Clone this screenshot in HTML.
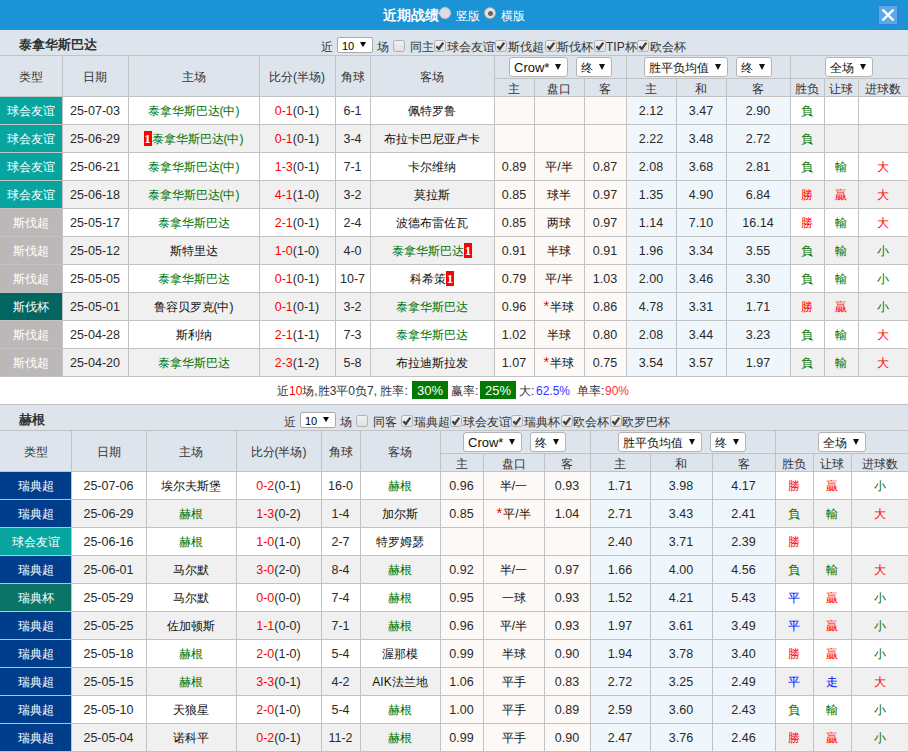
<!DOCTYPE html><html><head><meta charset="utf-8"><style>
*{margin:0;padding:0;box-sizing:border-box}
html,body{width:908px;height:752px;overflow:hidden;background:#fff;font-family:"Liberation Sans",sans-serif;font-size:12px;color:#333}
div{position:absolute}
.c{text-align:center;white-space:nowrap;overflow:hidden}
.n{font-size:12.5px}
.ttl{font-weight:bold;font-size:13px;color:#333;white-space:nowrap}
.flt{white-space:nowrap;font-size:12px;color:#333}
.flt span{position:relative}
.sel{background:#fff;border:1px solid #b4b4b4;border-radius:3px;white-space:nowrap;font-size:12px;color:#111}
.st{left:4px;top:3px;height:14px;line-height:14px}
.tri{top:6px;width:0;height:0;border-left:3px solid transparent;border-right:3px solid transparent;border-top:6px solid #111}
.arr{font-size:9px}
.nsel{background:#fff;border:1px solid #aaa;border-radius:2px;width:36px;height:16px}
.ns10{left:4px;top:2px;font-size:11px;line-height:12px;color:#000}
.tri2{left:22px;top:4px;width:0;height:0;border-left:3px solid transparent;border-right:3px solid transparent;border-top:5px solid #000}
.arr2{position:absolute;left:22px;top:1px;font-size:8px;line-height:12px}
.cb{width:12px;height:12px;border:1px solid #b0b0b0;border-radius:2.5px;background:linear-gradient(#f2f2f2,#e0e0e0)}
.cb svg{left:-1px;top:-1px}
.gb{background:#007a00;color:#fff;width:36px;height:18px;text-align:center;line-height:19px;font-size:13px}
.rc{display:inline-block;background:#f00;color:#fff;width:8px;text-align:center;line-height:15px;font-family:"Liberation Serif",serif;font-size:13px;font-weight:bold}

</style></head><body>
<div style="position:absolute;left:0px;top:0px;width:908px;height:30px;background:#1b93d5"></div>
<div style="left:383px;top:0;height:30px;line-height:30px;color:#fff;font-weight:bold;font-size:14px;white-space:nowrap">近期战绩</div>
<div style="left:439px;top:7px;width:12px;height:12px;border-radius:50%;background:#dedede;border:1px solid #c4c4c4"></div>
<div style="left:456px;top:1px;height:30px;line-height:30px;color:#fff;font-size:12px;white-space:nowrap">竖版</div>
<div style="left:484px;top:7px;width:12px;height:12px;border-radius:50%;background:#e4e4e4;border:1px solid #aaa"><div style="left:2.5px;top:2.5px;width:5px;height:5px;border-radius:50%;background:#666"></div></div>
<div style="left:501px;top:1px;height:30px;line-height:30px;color:#fff;font-size:12px;white-space:nowrap">横版</div>
<div style="left:877px;top:4px;width:22px;height:22px;background:#5aa8e6;border:2px solid #2a88dc"><svg width="18" height="18" style="position:absolute;left:0;top:0"><path d="M3.5 3.5L14.5 14.5M14.5 3.5L3.5 14.5" stroke="#fff" stroke-width="2.4"/></svg></div>
<div style="position:absolute;left:0px;top:30px;width:908px;height:25px;background:#dde4ec"></div>
<div class="ttl" style="left:19px;top:32px;height:25px;line-height:25px">泰拿华斯巴达</div>
<div class="flt" style="left:321px;top:40px;height:14px;line-height:14px">近</div>
<div class="nsel" style="left:337px;top:37px"><div class="ns10">10</div><div class="tri2"></div></div>
<div class="flt" style="left:377px;top:40px;height:14px;line-height:14px">场</div>
<div class="cb" style="left:393px;top:40px"></div>
<div class="flt" style="left:410px;top:40px;height:14px;line-height:14px">同主</div>
<div class="cb" style="left:434px;top:40px"><svg width="12" height="12" style="position:absolute;left:-1px;top:-1px"><path d="M2.4 6.2L4.8 8.9L9.3 2.6" stroke="#404040" stroke-width="2.3" fill="none"/></svg></div>
<div class="flt" style="left:447px;top:40px;height:14px;line-height:14px">球会友谊</div>
<div class="cb" style="left:495px;top:40px"><svg width="12" height="12" style="position:absolute;left:-1px;top:-1px"><path d="M2.4 6.2L4.8 8.9L9.3 2.6" stroke="#404040" stroke-width="2.3" fill="none"/></svg></div>
<div class="flt" style="left:508px;top:40px;height:14px;line-height:14px">斯伐超</div>
<div class="cb" style="left:545px;top:40px"><svg width="12" height="12" style="position:absolute;left:-1px;top:-1px"><path d="M2.4 6.2L4.8 8.9L9.3 2.6" stroke="#404040" stroke-width="2.3" fill="none"/></svg></div>
<div class="flt" style="left:557px;top:40px;height:14px;line-height:14px">斯伐杯</div>
<div class="cb" style="left:594px;top:40px"><svg width="12" height="12" style="position:absolute;left:-1px;top:-1px"><path d="M2.4 6.2L4.8 8.9L9.3 2.6" stroke="#404040" stroke-width="2.3" fill="none"/></svg></div>
<div class="flt" style="left:606px;top:40px;height:14px;line-height:14px">TIP杯</div>
<div class="cb" style="left:637px;top:40px"><svg width="12" height="12" style="position:absolute;left:-1px;top:-1px"><path d="M2.4 6.2L4.8 8.9L9.3 2.6" stroke="#404040" stroke-width="2.3" fill="none"/></svg></div>
<div class="flt" style="left:650px;top:40px;height:14px;line-height:14px">欧会杯</div>
<div style="position:absolute;left:0px;top:55px;width:908px;height:41px;background:#dde4ec"></div>
<div style="position:absolute;left:0px;top:55px;width:908px;height:1px;background:#c2c2c2"></div>
<div class="c" style="left:0px;top:56px;width:62px;height:40px;line-height:42px;">类型</div>
<div class="c" style="left:62px;top:56px;width:66px;height:40px;line-height:42px;">日期</div>
<div class="c" style="left:128px;top:56px;width:131px;height:40px;line-height:42px;">主场</div>
<div class="c" style="left:259px;top:56px;width:76px;height:40px;line-height:42px;">比分(半场)</div>
<div class="c" style="left:335px;top:56px;width:35px;height:40px;line-height:42px;">角球</div>
<div class="c" style="left:370px;top:56px;width:124px;height:40px;line-height:42px;">客场</div>
<div style="position:absolute;left:62px;top:55px;width:1px;height:41px;background:#c2c2c2"></div>
<div style="position:absolute;left:128px;top:55px;width:1px;height:41px;background:#c2c2c2"></div>
<div style="position:absolute;left:259px;top:55px;width:1px;height:41px;background:#c2c2c2"></div>
<div style="position:absolute;left:335px;top:55px;width:1px;height:41px;background:#c2c2c2"></div>
<div style="position:absolute;left:370px;top:55px;width:1px;height:41px;background:#c2c2c2"></div>
<div style="position:absolute;left:494px;top:55px;width:1px;height:41px;background:#c2c2c2"></div>
<div style="position:absolute;left:626px;top:55px;width:1px;height:41px;background:#c2c2c2"></div>
<div style="position:absolute;left:790px;top:55px;width:1px;height:41px;background:#c2c2c2"></div>
<div style="position:absolute;left:494px;top:78px;width:414px;height:1px;background:#c2c2c2"></div>
<div style="position:absolute;left:534px;top:78px;width:1px;height:18px;background:#c2c2c2"></div>
<div style="position:absolute;left:584px;top:78px;width:1px;height:18px;background:#c2c2c2"></div>
<div style="position:absolute;left:676px;top:78px;width:1px;height:18px;background:#c2c2c2"></div>
<div style="position:absolute;left:726px;top:78px;width:1px;height:18px;background:#c2c2c2"></div>
<div style="position:absolute;left:824px;top:78px;width:1px;height:18px;background:#c2c2c2"></div>
<div style="position:absolute;left:858px;top:78px;width:1px;height:18px;background:#c2c2c2"></div>
<div class="c" style="left:494px;top:79px;width:40px;height:17px;line-height:21px;">主</div>
<div class="c" style="left:534px;top:79px;width:50px;height:17px;line-height:21px;">盘口</div>
<div class="c" style="left:584px;top:79px;width:42px;height:17px;line-height:21px;">客</div>
<div class="c" style="left:626px;top:79px;width:50px;height:17px;line-height:21px;">主</div>
<div class="c" style="left:676px;top:79px;width:50px;height:17px;line-height:21px;">和</div>
<div class="c" style="left:726px;top:79px;width:64px;height:17px;line-height:21px;">客</div>
<div class="c" style="left:790px;top:79px;width:34px;height:17px;line-height:21px;">胜负</div>
<div class="c" style="left:824px;top:79px;width:34px;height:17px;line-height:21px;">让球</div>
<div class="c" style="left:858px;top:79px;width:50px;height:17px;line-height:21px;">进球数</div>
<div class="sel" style="left:509px;top:57px;width:59px;height:20px"><div class="st" style="font-size:13px;">Crow*</div><div class="tri" style="left:45px"></div></div>
<div class="sel" style="left:576px;top:57px;width:36px;height:20px"><div class="st" style="">终</div><div class="tri" style="left:22px"></div></div>
<div class="sel" style="left:644px;top:57px;width:84px;height:20px"><div class="st" style="">胜平负均值</div><div class="tri" style="left:70px"></div></div>
<div class="sel" style="left:736px;top:57px;width:36px;height:20px"><div class="st" style="">终</div><div class="tri" style="left:22px"></div></div>
<div class="sel" style="left:825px;top:57px;width:48px;height:20px"><div class="st" style="">全场</div><div class="tri" style="left:34px"></div></div>
<div style="position:absolute;left:0px;top:96px;width:908px;height:1px;background:#c2c2c2"></div>
<div style="position:absolute;left:0px;top:97px;width:908px;height:27px;background:#fff"></div>
<div style="position:absolute;left:495px;top:97px;width:131px;height:27px;background:#fdf9f6"></div>
<div style="position:absolute;left:627px;top:97px;width:163px;height:27px;background:#f0f7fc"></div>
<div style="position:absolute;left:0px;top:97px;width:62px;height:27px;background:#08a5a0"></div>
<div class="c" style="left:0px;top:97px;width:62px;height:27px;line-height:29px;color:#fff">球会友谊</div>
<div class="c" style="left:62px;top:97px;width:66px;height:27px;line-height:29px;color:#2a2a2a;font-size:12.5px">25-07-03</div>
<div class="c" style="left:128px;top:97px;width:131px;height:27px;line-height:29px;color:#111"><span style="color:#007400">泰拿华斯巴达(中)</span></div>
<div class="c" style="left:259px;top:97px;width:76px;height:27px;line-height:29px;color:#2a2a2a;font-size:12.5px"><span style="color:#f00">0-1</span>(0-1)</div>
<div class="c" style="left:335px;top:97px;width:35px;height:27px;line-height:29px;color:#2a2a2a;font-size:12.5px">6-1</div>
<div class="c" style="left:370px;top:97px;width:124px;height:27px;line-height:29px;color:#111">佩特罗鲁</div>
<div class="c" style="left:494px;top:97px;width:40px;height:27px;line-height:29px;color:#111"></div>
<div class="c" style="left:534px;top:97px;width:50px;height:27px;line-height:29px;color:#111"></div>
<div class="c" style="left:584px;top:97px;width:42px;height:27px;line-height:29px;color:#111"></div>
<div class="c" style="left:626px;top:97px;width:50px;height:27px;line-height:29px;color:#2a2a2a;font-size:12.5px">2.12</div>
<div class="c" style="left:676px;top:97px;width:50px;height:27px;line-height:29px;color:#2a2a2a;font-size:12.5px">3.47</div>
<div class="c" style="left:726px;top:97px;width:64px;height:27px;line-height:29px;color:#2a2a2a;font-size:12.5px">2.90</div>
<div class="c" style="left:790px;top:97px;width:34px;height:27px;line-height:29px;color:#111"><span style="color:#007400">負</span></div>
<div class="c" style="left:824px;top:97px;width:34px;height:27px;line-height:29px;color:#111"></div>
<div class="c" style="left:858px;top:97px;width:50px;height:27px;line-height:29px;color:#111"></div>
<div style="position:absolute;left:0px;top:124px;width:908px;height:1px;background:#c2c2c2"></div>
<div style="position:absolute;left:62px;top:96px;width:1px;height:28px;background:#c2c2c2"></div>
<div style="position:absolute;left:128px;top:96px;width:1px;height:28px;background:#c2c2c2"></div>
<div style="position:absolute;left:259px;top:96px;width:1px;height:28px;background:#c2c2c2"></div>
<div style="position:absolute;left:335px;top:96px;width:1px;height:28px;background:#c2c2c2"></div>
<div style="position:absolute;left:370px;top:96px;width:1px;height:28px;background:#c2c2c2"></div>
<div style="position:absolute;left:494px;top:96px;width:1px;height:28px;background:#c2c2c2"></div>
<div style="position:absolute;left:534px;top:96px;width:1px;height:28px;background:#c2c2c2"></div>
<div style="position:absolute;left:584px;top:96px;width:1px;height:28px;background:#c2c2c2"></div>
<div style="position:absolute;left:626px;top:96px;width:1px;height:28px;background:#c2c2c2"></div>
<div style="position:absolute;left:676px;top:96px;width:1px;height:28px;background:#c2c2c2"></div>
<div style="position:absolute;left:726px;top:96px;width:1px;height:28px;background:#c2c2c2"></div>
<div style="position:absolute;left:790px;top:96px;width:1px;height:28px;background:#c2c2c2"></div>
<div style="position:absolute;left:824px;top:96px;width:1px;height:28px;background:#c2c2c2"></div>
<div style="position:absolute;left:858px;top:96px;width:1px;height:28px;background:#c2c2c2"></div>
<div style="position:absolute;left:0px;top:125px;width:908px;height:27px;background:#f0f0f0"></div>
<div style="position:absolute;left:495px;top:125px;width:131px;height:27px;background:#fdf9f6"></div>
<div style="position:absolute;left:627px;top:125px;width:163px;height:27px;background:#f0f7fc"></div>
<div style="position:absolute;left:0px;top:125px;width:62px;height:27px;background:#08a5a0"></div>
<div class="c" style="left:0px;top:125px;width:62px;height:27px;line-height:29px;color:#fff">球会友谊</div>
<div class="c" style="left:62px;top:125px;width:66px;height:27px;line-height:29px;color:#2a2a2a;font-size:12.5px">25-06-29</div>
<div class="c" style="left:128px;top:125px;width:131px;height:27px;line-height:29px;color:#111"><span class="rc">1</span><span style="color:#007400">泰拿华斯巴达(中)</span></div>
<div class="c" style="left:259px;top:125px;width:76px;height:27px;line-height:29px;color:#2a2a2a;font-size:12.5px"><span style="color:#f00">0-1</span>(0-1)</div>
<div class="c" style="left:335px;top:125px;width:35px;height:27px;line-height:29px;color:#2a2a2a;font-size:12.5px">3-4</div>
<div class="c" style="left:370px;top:125px;width:124px;height:27px;line-height:29px;color:#111">布拉卡巴尼亚卢卡</div>
<div class="c" style="left:494px;top:125px;width:40px;height:27px;line-height:29px;color:#111"></div>
<div class="c" style="left:534px;top:125px;width:50px;height:27px;line-height:29px;color:#111"></div>
<div class="c" style="left:584px;top:125px;width:42px;height:27px;line-height:29px;color:#111"></div>
<div class="c" style="left:626px;top:125px;width:50px;height:27px;line-height:29px;color:#2a2a2a;font-size:12.5px">2.22</div>
<div class="c" style="left:676px;top:125px;width:50px;height:27px;line-height:29px;color:#2a2a2a;font-size:12.5px">3.48</div>
<div class="c" style="left:726px;top:125px;width:64px;height:27px;line-height:29px;color:#2a2a2a;font-size:12.5px">2.72</div>
<div class="c" style="left:790px;top:125px;width:34px;height:27px;line-height:29px;color:#111"><span style="color:#007400">負</span></div>
<div class="c" style="left:824px;top:125px;width:34px;height:27px;line-height:29px;color:#111"></div>
<div class="c" style="left:858px;top:125px;width:50px;height:27px;line-height:29px;color:#111"></div>
<div style="position:absolute;left:0px;top:152px;width:908px;height:1px;background:#c2c2c2"></div>
<div style="position:absolute;left:62px;top:124px;width:1px;height:28px;background:#c2c2c2"></div>
<div style="position:absolute;left:128px;top:124px;width:1px;height:28px;background:#c2c2c2"></div>
<div style="position:absolute;left:259px;top:124px;width:1px;height:28px;background:#c2c2c2"></div>
<div style="position:absolute;left:335px;top:124px;width:1px;height:28px;background:#c2c2c2"></div>
<div style="position:absolute;left:370px;top:124px;width:1px;height:28px;background:#c2c2c2"></div>
<div style="position:absolute;left:494px;top:124px;width:1px;height:28px;background:#c2c2c2"></div>
<div style="position:absolute;left:534px;top:124px;width:1px;height:28px;background:#c2c2c2"></div>
<div style="position:absolute;left:584px;top:124px;width:1px;height:28px;background:#c2c2c2"></div>
<div style="position:absolute;left:626px;top:124px;width:1px;height:28px;background:#c2c2c2"></div>
<div style="position:absolute;left:676px;top:124px;width:1px;height:28px;background:#c2c2c2"></div>
<div style="position:absolute;left:726px;top:124px;width:1px;height:28px;background:#c2c2c2"></div>
<div style="position:absolute;left:790px;top:124px;width:1px;height:28px;background:#c2c2c2"></div>
<div style="position:absolute;left:824px;top:124px;width:1px;height:28px;background:#c2c2c2"></div>
<div style="position:absolute;left:858px;top:124px;width:1px;height:28px;background:#c2c2c2"></div>
<div style="position:absolute;left:0px;top:153px;width:908px;height:27px;background:#fff"></div>
<div style="position:absolute;left:495px;top:153px;width:131px;height:27px;background:#fdf9f6"></div>
<div style="position:absolute;left:627px;top:153px;width:163px;height:27px;background:#f0f7fc"></div>
<div style="position:absolute;left:0px;top:153px;width:62px;height:27px;background:#08a5a0"></div>
<div class="c" style="left:0px;top:153px;width:62px;height:27px;line-height:29px;color:#fff">球会友谊</div>
<div class="c" style="left:62px;top:153px;width:66px;height:27px;line-height:29px;color:#2a2a2a;font-size:12.5px">25-06-21</div>
<div class="c" style="left:128px;top:153px;width:131px;height:27px;line-height:29px;color:#111"><span style="color:#007400">泰拿华斯巴达(中)</span></div>
<div class="c" style="left:259px;top:153px;width:76px;height:27px;line-height:29px;color:#2a2a2a;font-size:12.5px"><span style="color:#f00">1-3</span>(0-1)</div>
<div class="c" style="left:335px;top:153px;width:35px;height:27px;line-height:29px;color:#2a2a2a;font-size:12.5px">7-1</div>
<div class="c" style="left:370px;top:153px;width:124px;height:27px;line-height:29px;color:#111">卡尔维纳</div>
<div class="c" style="left:494px;top:153px;width:40px;height:27px;line-height:29px;color:#2a2a2a;font-size:12.5px">0.89</div>
<div class="c" style="left:534px;top:153px;width:50px;height:27px;line-height:29px;color:#111">平/半</div>
<div class="c" style="left:584px;top:153px;width:42px;height:27px;line-height:29px;color:#2a2a2a;font-size:12.5px">0.87</div>
<div class="c" style="left:626px;top:153px;width:50px;height:27px;line-height:29px;color:#2a2a2a;font-size:12.5px">2.08</div>
<div class="c" style="left:676px;top:153px;width:50px;height:27px;line-height:29px;color:#2a2a2a;font-size:12.5px">3.68</div>
<div class="c" style="left:726px;top:153px;width:64px;height:27px;line-height:29px;color:#2a2a2a;font-size:12.5px">2.81</div>
<div class="c" style="left:790px;top:153px;width:34px;height:27px;line-height:29px;color:#111"><span style="color:#007400">負</span></div>
<div class="c" style="left:824px;top:153px;width:34px;height:27px;line-height:29px;color:#111"><span style="color:#007400">輸</span></div>
<div class="c" style="left:858px;top:153px;width:50px;height:27px;line-height:29px;color:#111"><span style="color:#f00">大</span></div>
<div style="position:absolute;left:0px;top:180px;width:908px;height:1px;background:#c2c2c2"></div>
<div style="position:absolute;left:62px;top:152px;width:1px;height:28px;background:#c2c2c2"></div>
<div style="position:absolute;left:128px;top:152px;width:1px;height:28px;background:#c2c2c2"></div>
<div style="position:absolute;left:259px;top:152px;width:1px;height:28px;background:#c2c2c2"></div>
<div style="position:absolute;left:335px;top:152px;width:1px;height:28px;background:#c2c2c2"></div>
<div style="position:absolute;left:370px;top:152px;width:1px;height:28px;background:#c2c2c2"></div>
<div style="position:absolute;left:494px;top:152px;width:1px;height:28px;background:#c2c2c2"></div>
<div style="position:absolute;left:534px;top:152px;width:1px;height:28px;background:#c2c2c2"></div>
<div style="position:absolute;left:584px;top:152px;width:1px;height:28px;background:#c2c2c2"></div>
<div style="position:absolute;left:626px;top:152px;width:1px;height:28px;background:#c2c2c2"></div>
<div style="position:absolute;left:676px;top:152px;width:1px;height:28px;background:#c2c2c2"></div>
<div style="position:absolute;left:726px;top:152px;width:1px;height:28px;background:#c2c2c2"></div>
<div style="position:absolute;left:790px;top:152px;width:1px;height:28px;background:#c2c2c2"></div>
<div style="position:absolute;left:824px;top:152px;width:1px;height:28px;background:#c2c2c2"></div>
<div style="position:absolute;left:858px;top:152px;width:1px;height:28px;background:#c2c2c2"></div>
<div style="position:absolute;left:0px;top:181px;width:908px;height:27px;background:#f0f0f0"></div>
<div style="position:absolute;left:495px;top:181px;width:131px;height:27px;background:#fdf9f6"></div>
<div style="position:absolute;left:627px;top:181px;width:163px;height:27px;background:#f0f7fc"></div>
<div style="position:absolute;left:0px;top:181px;width:62px;height:27px;background:#08a5a0"></div>
<div class="c" style="left:0px;top:181px;width:62px;height:27px;line-height:29px;color:#fff">球会友谊</div>
<div class="c" style="left:62px;top:181px;width:66px;height:27px;line-height:29px;color:#2a2a2a;font-size:12.5px">25-06-18</div>
<div class="c" style="left:128px;top:181px;width:131px;height:27px;line-height:29px;color:#111"><span style="color:#007400">泰拿华斯巴达(中)</span></div>
<div class="c" style="left:259px;top:181px;width:76px;height:27px;line-height:29px;color:#2a2a2a;font-size:12.5px"><span style="color:#f00">4-1</span>(1-0)</div>
<div class="c" style="left:335px;top:181px;width:35px;height:27px;line-height:29px;color:#2a2a2a;font-size:12.5px">3-2</div>
<div class="c" style="left:370px;top:181px;width:124px;height:27px;line-height:29px;color:#111">莫拉斯</div>
<div class="c" style="left:494px;top:181px;width:40px;height:27px;line-height:29px;color:#2a2a2a;font-size:12.5px">0.85</div>
<div class="c" style="left:534px;top:181px;width:50px;height:27px;line-height:29px;color:#111">球半</div>
<div class="c" style="left:584px;top:181px;width:42px;height:27px;line-height:29px;color:#2a2a2a;font-size:12.5px">0.97</div>
<div class="c" style="left:626px;top:181px;width:50px;height:27px;line-height:29px;color:#2a2a2a;font-size:12.5px">1.35</div>
<div class="c" style="left:676px;top:181px;width:50px;height:27px;line-height:29px;color:#2a2a2a;font-size:12.5px">4.90</div>
<div class="c" style="left:726px;top:181px;width:64px;height:27px;line-height:29px;color:#2a2a2a;font-size:12.5px">6.84</div>
<div class="c" style="left:790px;top:181px;width:34px;height:27px;line-height:29px;color:#111"><span style="color:#f00">勝</span></div>
<div class="c" style="left:824px;top:181px;width:34px;height:27px;line-height:29px;color:#111"><span style="color:#f00">贏</span></div>
<div class="c" style="left:858px;top:181px;width:50px;height:27px;line-height:29px;color:#111"><span style="color:#f00">大</span></div>
<div style="position:absolute;left:0px;top:208px;width:908px;height:1px;background:#c2c2c2"></div>
<div style="position:absolute;left:62px;top:180px;width:1px;height:28px;background:#c2c2c2"></div>
<div style="position:absolute;left:128px;top:180px;width:1px;height:28px;background:#c2c2c2"></div>
<div style="position:absolute;left:259px;top:180px;width:1px;height:28px;background:#c2c2c2"></div>
<div style="position:absolute;left:335px;top:180px;width:1px;height:28px;background:#c2c2c2"></div>
<div style="position:absolute;left:370px;top:180px;width:1px;height:28px;background:#c2c2c2"></div>
<div style="position:absolute;left:494px;top:180px;width:1px;height:28px;background:#c2c2c2"></div>
<div style="position:absolute;left:534px;top:180px;width:1px;height:28px;background:#c2c2c2"></div>
<div style="position:absolute;left:584px;top:180px;width:1px;height:28px;background:#c2c2c2"></div>
<div style="position:absolute;left:626px;top:180px;width:1px;height:28px;background:#c2c2c2"></div>
<div style="position:absolute;left:676px;top:180px;width:1px;height:28px;background:#c2c2c2"></div>
<div style="position:absolute;left:726px;top:180px;width:1px;height:28px;background:#c2c2c2"></div>
<div style="position:absolute;left:790px;top:180px;width:1px;height:28px;background:#c2c2c2"></div>
<div style="position:absolute;left:824px;top:180px;width:1px;height:28px;background:#c2c2c2"></div>
<div style="position:absolute;left:858px;top:180px;width:1px;height:28px;background:#c2c2c2"></div>
<div style="position:absolute;left:0px;top:209px;width:908px;height:27px;background:#fff"></div>
<div style="position:absolute;left:495px;top:209px;width:131px;height:27px;background:#fdf9f6"></div>
<div style="position:absolute;left:627px;top:209px;width:163px;height:27px;background:#f0f7fc"></div>
<div style="position:absolute;left:0px;top:209px;width:62px;height:27px;background:#bdb8b8"></div>
<div class="c" style="left:0px;top:209px;width:62px;height:27px;line-height:29px;color:#fff">斯伐超</div>
<div class="c" style="left:62px;top:209px;width:66px;height:27px;line-height:29px;color:#2a2a2a;font-size:12.5px">25-05-17</div>
<div class="c" style="left:128px;top:209px;width:131px;height:27px;line-height:29px;color:#111"><span style="color:#007400">泰拿华斯巴达</span></div>
<div class="c" style="left:259px;top:209px;width:76px;height:27px;line-height:29px;color:#2a2a2a;font-size:12.5px"><span style="color:#f00">2-1</span>(0-1)</div>
<div class="c" style="left:335px;top:209px;width:35px;height:27px;line-height:29px;color:#2a2a2a;font-size:12.5px">2-4</div>
<div class="c" style="left:370px;top:209px;width:124px;height:27px;line-height:29px;color:#111">波德布雷佐瓦</div>
<div class="c" style="left:494px;top:209px;width:40px;height:27px;line-height:29px;color:#2a2a2a;font-size:12.5px">0.85</div>
<div class="c" style="left:534px;top:209px;width:50px;height:27px;line-height:29px;color:#111">两球</div>
<div class="c" style="left:584px;top:209px;width:42px;height:27px;line-height:29px;color:#2a2a2a;font-size:12.5px">0.97</div>
<div class="c" style="left:626px;top:209px;width:50px;height:27px;line-height:29px;color:#2a2a2a;font-size:12.5px">1.14</div>
<div class="c" style="left:676px;top:209px;width:50px;height:27px;line-height:29px;color:#2a2a2a;font-size:12.5px">7.10</div>
<div class="c" style="left:726px;top:209px;width:64px;height:27px;line-height:29px;color:#2a2a2a;font-size:12.5px">16.14</div>
<div class="c" style="left:790px;top:209px;width:34px;height:27px;line-height:29px;color:#111"><span style="color:#f00">勝</span></div>
<div class="c" style="left:824px;top:209px;width:34px;height:27px;line-height:29px;color:#111"><span style="color:#007400">輸</span></div>
<div class="c" style="left:858px;top:209px;width:50px;height:27px;line-height:29px;color:#111"><span style="color:#f00">大</span></div>
<div style="position:absolute;left:0px;top:236px;width:908px;height:1px;background:#c2c2c2"></div>
<div style="position:absolute;left:62px;top:208px;width:1px;height:28px;background:#c2c2c2"></div>
<div style="position:absolute;left:128px;top:208px;width:1px;height:28px;background:#c2c2c2"></div>
<div style="position:absolute;left:259px;top:208px;width:1px;height:28px;background:#c2c2c2"></div>
<div style="position:absolute;left:335px;top:208px;width:1px;height:28px;background:#c2c2c2"></div>
<div style="position:absolute;left:370px;top:208px;width:1px;height:28px;background:#c2c2c2"></div>
<div style="position:absolute;left:494px;top:208px;width:1px;height:28px;background:#c2c2c2"></div>
<div style="position:absolute;left:534px;top:208px;width:1px;height:28px;background:#c2c2c2"></div>
<div style="position:absolute;left:584px;top:208px;width:1px;height:28px;background:#c2c2c2"></div>
<div style="position:absolute;left:626px;top:208px;width:1px;height:28px;background:#c2c2c2"></div>
<div style="position:absolute;left:676px;top:208px;width:1px;height:28px;background:#c2c2c2"></div>
<div style="position:absolute;left:726px;top:208px;width:1px;height:28px;background:#c2c2c2"></div>
<div style="position:absolute;left:790px;top:208px;width:1px;height:28px;background:#c2c2c2"></div>
<div style="position:absolute;left:824px;top:208px;width:1px;height:28px;background:#c2c2c2"></div>
<div style="position:absolute;left:858px;top:208px;width:1px;height:28px;background:#c2c2c2"></div>
<div style="position:absolute;left:0px;top:237px;width:908px;height:27px;background:#f0f0f0"></div>
<div style="position:absolute;left:495px;top:237px;width:131px;height:27px;background:#fdf9f6"></div>
<div style="position:absolute;left:627px;top:237px;width:163px;height:27px;background:#f0f7fc"></div>
<div style="position:absolute;left:0px;top:237px;width:62px;height:27px;background:#bdb8b8"></div>
<div class="c" style="left:0px;top:237px;width:62px;height:27px;line-height:29px;color:#fff">斯伐超</div>
<div class="c" style="left:62px;top:237px;width:66px;height:27px;line-height:29px;color:#2a2a2a;font-size:12.5px">25-05-12</div>
<div class="c" style="left:128px;top:237px;width:131px;height:27px;line-height:29px;color:#111">斯特里达</div>
<div class="c" style="left:259px;top:237px;width:76px;height:27px;line-height:29px;color:#2a2a2a;font-size:12.5px"><span style="color:#f00">1-0</span>(1-0)</div>
<div class="c" style="left:335px;top:237px;width:35px;height:27px;line-height:29px;color:#2a2a2a;font-size:12.5px">4-0</div>
<div class="c" style="left:370px;top:237px;width:124px;height:27px;line-height:29px;color:#111"><span style="color:#007400">泰拿华斯巴达</span><span class="rc">1</span></div>
<div class="c" style="left:494px;top:237px;width:40px;height:27px;line-height:29px;color:#2a2a2a;font-size:12.5px">0.91</div>
<div class="c" style="left:534px;top:237px;width:50px;height:27px;line-height:29px;color:#111">半球</div>
<div class="c" style="left:584px;top:237px;width:42px;height:27px;line-height:29px;color:#2a2a2a;font-size:12.5px">0.91</div>
<div class="c" style="left:626px;top:237px;width:50px;height:27px;line-height:29px;color:#2a2a2a;font-size:12.5px">1.96</div>
<div class="c" style="left:676px;top:237px;width:50px;height:27px;line-height:29px;color:#2a2a2a;font-size:12.5px">3.34</div>
<div class="c" style="left:726px;top:237px;width:64px;height:27px;line-height:29px;color:#2a2a2a;font-size:12.5px">3.55</div>
<div class="c" style="left:790px;top:237px;width:34px;height:27px;line-height:29px;color:#111"><span style="color:#007400">負</span></div>
<div class="c" style="left:824px;top:237px;width:34px;height:27px;line-height:29px;color:#111"><span style="color:#007400">輸</span></div>
<div class="c" style="left:858px;top:237px;width:50px;height:27px;line-height:29px;color:#111"><span style="color:#007400">小</span></div>
<div style="position:absolute;left:0px;top:264px;width:908px;height:1px;background:#c2c2c2"></div>
<div style="position:absolute;left:62px;top:236px;width:1px;height:28px;background:#c2c2c2"></div>
<div style="position:absolute;left:128px;top:236px;width:1px;height:28px;background:#c2c2c2"></div>
<div style="position:absolute;left:259px;top:236px;width:1px;height:28px;background:#c2c2c2"></div>
<div style="position:absolute;left:335px;top:236px;width:1px;height:28px;background:#c2c2c2"></div>
<div style="position:absolute;left:370px;top:236px;width:1px;height:28px;background:#c2c2c2"></div>
<div style="position:absolute;left:494px;top:236px;width:1px;height:28px;background:#c2c2c2"></div>
<div style="position:absolute;left:534px;top:236px;width:1px;height:28px;background:#c2c2c2"></div>
<div style="position:absolute;left:584px;top:236px;width:1px;height:28px;background:#c2c2c2"></div>
<div style="position:absolute;left:626px;top:236px;width:1px;height:28px;background:#c2c2c2"></div>
<div style="position:absolute;left:676px;top:236px;width:1px;height:28px;background:#c2c2c2"></div>
<div style="position:absolute;left:726px;top:236px;width:1px;height:28px;background:#c2c2c2"></div>
<div style="position:absolute;left:790px;top:236px;width:1px;height:28px;background:#c2c2c2"></div>
<div style="position:absolute;left:824px;top:236px;width:1px;height:28px;background:#c2c2c2"></div>
<div style="position:absolute;left:858px;top:236px;width:1px;height:28px;background:#c2c2c2"></div>
<div style="position:absolute;left:0px;top:265px;width:908px;height:27px;background:#fff"></div>
<div style="position:absolute;left:495px;top:265px;width:131px;height:27px;background:#fdf9f6"></div>
<div style="position:absolute;left:627px;top:265px;width:163px;height:27px;background:#f0f7fc"></div>
<div style="position:absolute;left:0px;top:265px;width:62px;height:27px;background:#bdb8b8"></div>
<div class="c" style="left:0px;top:265px;width:62px;height:27px;line-height:29px;color:#fff">斯伐超</div>
<div class="c" style="left:62px;top:265px;width:66px;height:27px;line-height:29px;color:#2a2a2a;font-size:12.5px">25-05-05</div>
<div class="c" style="left:128px;top:265px;width:131px;height:27px;line-height:29px;color:#111"><span style="color:#007400">泰拿华斯巴达</span></div>
<div class="c" style="left:259px;top:265px;width:76px;height:27px;line-height:29px;color:#2a2a2a;font-size:12.5px"><span style="color:#f00">0-1</span>(0-1)</div>
<div class="c" style="left:335px;top:265px;width:35px;height:27px;line-height:29px;color:#2a2a2a;font-size:12.5px">10-7</div>
<div class="c" style="left:370px;top:265px;width:124px;height:27px;line-height:29px;color:#111">科希策<span class="rc">1</span></div>
<div class="c" style="left:494px;top:265px;width:40px;height:27px;line-height:29px;color:#2a2a2a;font-size:12.5px">0.79</div>
<div class="c" style="left:534px;top:265px;width:50px;height:27px;line-height:29px;color:#111">平/半</div>
<div class="c" style="left:584px;top:265px;width:42px;height:27px;line-height:29px;color:#2a2a2a;font-size:12.5px">1.03</div>
<div class="c" style="left:626px;top:265px;width:50px;height:27px;line-height:29px;color:#2a2a2a;font-size:12.5px">2.00</div>
<div class="c" style="left:676px;top:265px;width:50px;height:27px;line-height:29px;color:#2a2a2a;font-size:12.5px">3.46</div>
<div class="c" style="left:726px;top:265px;width:64px;height:27px;line-height:29px;color:#2a2a2a;font-size:12.5px">3.30</div>
<div class="c" style="left:790px;top:265px;width:34px;height:27px;line-height:29px;color:#111"><span style="color:#007400">負</span></div>
<div class="c" style="left:824px;top:265px;width:34px;height:27px;line-height:29px;color:#111"><span style="color:#007400">輸</span></div>
<div class="c" style="left:858px;top:265px;width:50px;height:27px;line-height:29px;color:#111"><span style="color:#007400">小</span></div>
<div style="position:absolute;left:0px;top:292px;width:908px;height:1px;background:#c2c2c2"></div>
<div style="position:absolute;left:62px;top:264px;width:1px;height:28px;background:#c2c2c2"></div>
<div style="position:absolute;left:128px;top:264px;width:1px;height:28px;background:#c2c2c2"></div>
<div style="position:absolute;left:259px;top:264px;width:1px;height:28px;background:#c2c2c2"></div>
<div style="position:absolute;left:335px;top:264px;width:1px;height:28px;background:#c2c2c2"></div>
<div style="position:absolute;left:370px;top:264px;width:1px;height:28px;background:#c2c2c2"></div>
<div style="position:absolute;left:494px;top:264px;width:1px;height:28px;background:#c2c2c2"></div>
<div style="position:absolute;left:534px;top:264px;width:1px;height:28px;background:#c2c2c2"></div>
<div style="position:absolute;left:584px;top:264px;width:1px;height:28px;background:#c2c2c2"></div>
<div style="position:absolute;left:626px;top:264px;width:1px;height:28px;background:#c2c2c2"></div>
<div style="position:absolute;left:676px;top:264px;width:1px;height:28px;background:#c2c2c2"></div>
<div style="position:absolute;left:726px;top:264px;width:1px;height:28px;background:#c2c2c2"></div>
<div style="position:absolute;left:790px;top:264px;width:1px;height:28px;background:#c2c2c2"></div>
<div style="position:absolute;left:824px;top:264px;width:1px;height:28px;background:#c2c2c2"></div>
<div style="position:absolute;left:858px;top:264px;width:1px;height:28px;background:#c2c2c2"></div>
<div style="position:absolute;left:0px;top:293px;width:908px;height:27px;background:#f0f0f0"></div>
<div style="position:absolute;left:495px;top:293px;width:131px;height:27px;background:#fdf9f6"></div>
<div style="position:absolute;left:627px;top:293px;width:163px;height:27px;background:#f0f7fc"></div>
<div style="position:absolute;left:0px;top:293px;width:62px;height:27px;background:#00665f"></div>
<div class="c" style="left:0px;top:293px;width:62px;height:27px;line-height:29px;color:#fff">斯伐杯</div>
<div class="c" style="left:62px;top:293px;width:66px;height:27px;line-height:29px;color:#2a2a2a;font-size:12.5px">25-05-01</div>
<div class="c" style="left:128px;top:293px;width:131px;height:27px;line-height:29px;color:#111">鲁容贝罗克(中)</div>
<div class="c" style="left:259px;top:293px;width:76px;height:27px;line-height:29px;color:#2a2a2a;font-size:12.5px"><span style="color:#f00">0-1</span>(0-1)</div>
<div class="c" style="left:335px;top:293px;width:35px;height:27px;line-height:29px;color:#2a2a2a;font-size:12.5px">3-2</div>
<div class="c" style="left:370px;top:293px;width:124px;height:27px;line-height:29px;color:#111"><span style="color:#007400">泰拿华斯巴达</span></div>
<div class="c" style="left:494px;top:293px;width:40px;height:27px;line-height:29px;color:#2a2a2a;font-size:12.5px">0.96</div>
<div class="c" style="left:534px;top:293px;width:50px;height:27px;line-height:29px;color:#111"><span style="color:#f00;font-size:15px;line-height:10px;margin-right:1px">*</span>半球</div>
<div class="c" style="left:584px;top:293px;width:42px;height:27px;line-height:29px;color:#2a2a2a;font-size:12.5px">0.86</div>
<div class="c" style="left:626px;top:293px;width:50px;height:27px;line-height:29px;color:#2a2a2a;font-size:12.5px">4.78</div>
<div class="c" style="left:676px;top:293px;width:50px;height:27px;line-height:29px;color:#2a2a2a;font-size:12.5px">3.31</div>
<div class="c" style="left:726px;top:293px;width:64px;height:27px;line-height:29px;color:#2a2a2a;font-size:12.5px">1.71</div>
<div class="c" style="left:790px;top:293px;width:34px;height:27px;line-height:29px;color:#111"><span style="color:#f00">勝</span></div>
<div class="c" style="left:824px;top:293px;width:34px;height:27px;line-height:29px;color:#111"><span style="color:#f00">贏</span></div>
<div class="c" style="left:858px;top:293px;width:50px;height:27px;line-height:29px;color:#111"><span style="color:#007400">小</span></div>
<div style="position:absolute;left:0px;top:320px;width:908px;height:1px;background:#c2c2c2"></div>
<div style="position:absolute;left:62px;top:292px;width:1px;height:28px;background:#c2c2c2"></div>
<div style="position:absolute;left:128px;top:292px;width:1px;height:28px;background:#c2c2c2"></div>
<div style="position:absolute;left:259px;top:292px;width:1px;height:28px;background:#c2c2c2"></div>
<div style="position:absolute;left:335px;top:292px;width:1px;height:28px;background:#c2c2c2"></div>
<div style="position:absolute;left:370px;top:292px;width:1px;height:28px;background:#c2c2c2"></div>
<div style="position:absolute;left:494px;top:292px;width:1px;height:28px;background:#c2c2c2"></div>
<div style="position:absolute;left:534px;top:292px;width:1px;height:28px;background:#c2c2c2"></div>
<div style="position:absolute;left:584px;top:292px;width:1px;height:28px;background:#c2c2c2"></div>
<div style="position:absolute;left:626px;top:292px;width:1px;height:28px;background:#c2c2c2"></div>
<div style="position:absolute;left:676px;top:292px;width:1px;height:28px;background:#c2c2c2"></div>
<div style="position:absolute;left:726px;top:292px;width:1px;height:28px;background:#c2c2c2"></div>
<div style="position:absolute;left:790px;top:292px;width:1px;height:28px;background:#c2c2c2"></div>
<div style="position:absolute;left:824px;top:292px;width:1px;height:28px;background:#c2c2c2"></div>
<div style="position:absolute;left:858px;top:292px;width:1px;height:28px;background:#c2c2c2"></div>
<div style="position:absolute;left:0px;top:321px;width:908px;height:27px;background:#fff"></div>
<div style="position:absolute;left:495px;top:321px;width:131px;height:27px;background:#fdf9f6"></div>
<div style="position:absolute;left:627px;top:321px;width:163px;height:27px;background:#f0f7fc"></div>
<div style="position:absolute;left:0px;top:321px;width:62px;height:27px;background:#bdb8b8"></div>
<div class="c" style="left:0px;top:321px;width:62px;height:27px;line-height:29px;color:#fff">斯伐超</div>
<div class="c" style="left:62px;top:321px;width:66px;height:27px;line-height:29px;color:#2a2a2a;font-size:12.5px">25-04-28</div>
<div class="c" style="left:128px;top:321px;width:131px;height:27px;line-height:29px;color:#111">斯利纳</div>
<div class="c" style="left:259px;top:321px;width:76px;height:27px;line-height:29px;color:#2a2a2a;font-size:12.5px"><span style="color:#f00">2-1</span>(1-1)</div>
<div class="c" style="left:335px;top:321px;width:35px;height:27px;line-height:29px;color:#2a2a2a;font-size:12.5px">7-3</div>
<div class="c" style="left:370px;top:321px;width:124px;height:27px;line-height:29px;color:#111"><span style="color:#007400">泰拿华斯巴达</span></div>
<div class="c" style="left:494px;top:321px;width:40px;height:27px;line-height:29px;color:#2a2a2a;font-size:12.5px">1.02</div>
<div class="c" style="left:534px;top:321px;width:50px;height:27px;line-height:29px;color:#111">半球</div>
<div class="c" style="left:584px;top:321px;width:42px;height:27px;line-height:29px;color:#2a2a2a;font-size:12.5px">0.80</div>
<div class="c" style="left:626px;top:321px;width:50px;height:27px;line-height:29px;color:#2a2a2a;font-size:12.5px">2.08</div>
<div class="c" style="left:676px;top:321px;width:50px;height:27px;line-height:29px;color:#2a2a2a;font-size:12.5px">3.44</div>
<div class="c" style="left:726px;top:321px;width:64px;height:27px;line-height:29px;color:#2a2a2a;font-size:12.5px">3.23</div>
<div class="c" style="left:790px;top:321px;width:34px;height:27px;line-height:29px;color:#111"><span style="color:#007400">負</span></div>
<div class="c" style="left:824px;top:321px;width:34px;height:27px;line-height:29px;color:#111"><span style="color:#007400">輸</span></div>
<div class="c" style="left:858px;top:321px;width:50px;height:27px;line-height:29px;color:#111"><span style="color:#f00">大</span></div>
<div style="position:absolute;left:0px;top:348px;width:908px;height:1px;background:#c2c2c2"></div>
<div style="position:absolute;left:62px;top:320px;width:1px;height:28px;background:#c2c2c2"></div>
<div style="position:absolute;left:128px;top:320px;width:1px;height:28px;background:#c2c2c2"></div>
<div style="position:absolute;left:259px;top:320px;width:1px;height:28px;background:#c2c2c2"></div>
<div style="position:absolute;left:335px;top:320px;width:1px;height:28px;background:#c2c2c2"></div>
<div style="position:absolute;left:370px;top:320px;width:1px;height:28px;background:#c2c2c2"></div>
<div style="position:absolute;left:494px;top:320px;width:1px;height:28px;background:#c2c2c2"></div>
<div style="position:absolute;left:534px;top:320px;width:1px;height:28px;background:#c2c2c2"></div>
<div style="position:absolute;left:584px;top:320px;width:1px;height:28px;background:#c2c2c2"></div>
<div style="position:absolute;left:626px;top:320px;width:1px;height:28px;background:#c2c2c2"></div>
<div style="position:absolute;left:676px;top:320px;width:1px;height:28px;background:#c2c2c2"></div>
<div style="position:absolute;left:726px;top:320px;width:1px;height:28px;background:#c2c2c2"></div>
<div style="position:absolute;left:790px;top:320px;width:1px;height:28px;background:#c2c2c2"></div>
<div style="position:absolute;left:824px;top:320px;width:1px;height:28px;background:#c2c2c2"></div>
<div style="position:absolute;left:858px;top:320px;width:1px;height:28px;background:#c2c2c2"></div>
<div style="position:absolute;left:0px;top:349px;width:908px;height:27px;background:#f0f0f0"></div>
<div style="position:absolute;left:495px;top:349px;width:131px;height:27px;background:#fdf9f6"></div>
<div style="position:absolute;left:627px;top:349px;width:163px;height:27px;background:#f0f7fc"></div>
<div style="position:absolute;left:0px;top:349px;width:62px;height:27px;background:#bdb8b8"></div>
<div class="c" style="left:0px;top:349px;width:62px;height:27px;line-height:29px;color:#fff">斯伐超</div>
<div class="c" style="left:62px;top:349px;width:66px;height:27px;line-height:29px;color:#2a2a2a;font-size:12.5px">25-04-20</div>
<div class="c" style="left:128px;top:349px;width:131px;height:27px;line-height:29px;color:#111"><span style="color:#007400">泰拿华斯巴达</span></div>
<div class="c" style="left:259px;top:349px;width:76px;height:27px;line-height:29px;color:#2a2a2a;font-size:12.5px"><span style="color:#f00">2-3</span>(1-2)</div>
<div class="c" style="left:335px;top:349px;width:35px;height:27px;line-height:29px;color:#2a2a2a;font-size:12.5px">5-8</div>
<div class="c" style="left:370px;top:349px;width:124px;height:27px;line-height:29px;color:#111">布拉迪斯拉发</div>
<div class="c" style="left:494px;top:349px;width:40px;height:27px;line-height:29px;color:#2a2a2a;font-size:12.5px">1.07</div>
<div class="c" style="left:534px;top:349px;width:50px;height:27px;line-height:29px;color:#111"><span style="color:#f00;font-size:15px;line-height:10px;margin-right:1px">*</span>半球</div>
<div class="c" style="left:584px;top:349px;width:42px;height:27px;line-height:29px;color:#2a2a2a;font-size:12.5px">0.75</div>
<div class="c" style="left:626px;top:349px;width:50px;height:27px;line-height:29px;color:#2a2a2a;font-size:12.5px">3.54</div>
<div class="c" style="left:676px;top:349px;width:50px;height:27px;line-height:29px;color:#2a2a2a;font-size:12.5px">3.57</div>
<div class="c" style="left:726px;top:349px;width:64px;height:27px;line-height:29px;color:#2a2a2a;font-size:12.5px">1.97</div>
<div class="c" style="left:790px;top:349px;width:34px;height:27px;line-height:29px;color:#111"><span style="color:#007400">負</span></div>
<div class="c" style="left:824px;top:349px;width:34px;height:27px;line-height:29px;color:#111"><span style="color:#007400">輸</span></div>
<div class="c" style="left:858px;top:349px;width:50px;height:27px;line-height:29px;color:#111"><span style="color:#f00">大</span></div>
<div style="position:absolute;left:0px;top:376px;width:908px;height:1px;background:#c2c2c2"></div>
<div style="position:absolute;left:62px;top:348px;width:1px;height:28px;background:#c2c2c2"></div>
<div style="position:absolute;left:128px;top:348px;width:1px;height:28px;background:#c2c2c2"></div>
<div style="position:absolute;left:259px;top:348px;width:1px;height:28px;background:#c2c2c2"></div>
<div style="position:absolute;left:335px;top:348px;width:1px;height:28px;background:#c2c2c2"></div>
<div style="position:absolute;left:370px;top:348px;width:1px;height:28px;background:#c2c2c2"></div>
<div style="position:absolute;left:494px;top:348px;width:1px;height:28px;background:#c2c2c2"></div>
<div style="position:absolute;left:534px;top:348px;width:1px;height:28px;background:#c2c2c2"></div>
<div style="position:absolute;left:584px;top:348px;width:1px;height:28px;background:#c2c2c2"></div>
<div style="position:absolute;left:626px;top:348px;width:1px;height:28px;background:#c2c2c2"></div>
<div style="position:absolute;left:676px;top:348px;width:1px;height:28px;background:#c2c2c2"></div>
<div style="position:absolute;left:726px;top:348px;width:1px;height:28px;background:#c2c2c2"></div>
<div style="position:absolute;left:790px;top:348px;width:1px;height:28px;background:#c2c2c2"></div>
<div style="position:absolute;left:824px;top:348px;width:1px;height:28px;background:#c2c2c2"></div>
<div style="position:absolute;left:858px;top:348px;width:1px;height:28px;background:#c2c2c2"></div>
<div style="position:absolute;left:0px;top:377px;width:908px;height:27px;background:#fff"></div>
<div style="left:277px;top:378px;height:27px;line-height:27px;white-space:nowrap;font-size:12px;color:#333">近<span style="color:#f00">10</span>场,胜3平0负7, 胜率:</div>
<div class="gb" style="left:412px;top:381px">30%</div>
<div style="left:451px;top:378px;height:27px;line-height:27px;white-space:nowrap;font-size:12px;color:#333">赢率:</div>
<div class="gb" style="left:480px;top:381px">25%</div>
<div style="left:519px;top:378px;height:27px;line-height:27px;white-space:nowrap;font-size:12px;color:#333">大:</div>
<div style="left:536px;top:378px;height:27px;line-height:27px;white-space:nowrap;font-size:12px;color:#333;color:#33f">62.5%</div>
<div style="left:577px;top:378px;height:27px;line-height:27px;white-space:nowrap;font-size:12px;color:#333">单率:</div>
<div style="left:605px;top:378px;height:27px;line-height:27px;white-space:nowrap;font-size:12px;color:#333;color:#f33">90%</div>
<div style="position:absolute;left:0px;top:404px;width:908px;height:1px;background:#c2c2c2"></div>
<div style="position:absolute;left:0px;top:405px;width:908px;height:25px;background:#dde4ec"></div>
<div class="ttl" style="left:19px;top:407px;height:25px;line-height:25px">赫根</div>
<div class="flt" style="left:284px;top:415px;height:14px;line-height:14px">近</div>
<div class="nsel" style="left:300px;top:412px"><div class="ns10">10</div><div class="tri2"></div></div>
<div class="flt" style="left:340px;top:415px;height:14px;line-height:14px">场</div>
<div class="cb" style="left:356px;top:415px"></div>
<div class="flt" style="left:373px;top:415px;height:14px;line-height:14px">同客</div>
<div class="cb" style="left:401px;top:415px"><svg width="12" height="12" style="position:absolute;left:-1px;top:-1px"><path d="M2.4 6.2L4.8 8.9L9.3 2.6" stroke="#404040" stroke-width="2.3" fill="none"/></svg></div>
<div class="flt" style="left:414px;top:415px;height:14px;line-height:14px">瑞典超</div>
<div class="cb" style="left:450px;top:415px"><svg width="12" height="12" style="position:absolute;left:-1px;top:-1px"><path d="M2.4 6.2L4.8 8.9L9.3 2.6" stroke="#404040" stroke-width="2.3" fill="none"/></svg></div>
<div class="flt" style="left:463px;top:415px;height:14px;line-height:14px">球会友谊</div>
<div class="cb" style="left:511px;top:415px"><svg width="12" height="12" style="position:absolute;left:-1px;top:-1px"><path d="M2.4 6.2L4.8 8.9L9.3 2.6" stroke="#404040" stroke-width="2.3" fill="none"/></svg></div>
<div class="flt" style="left:524px;top:415px;height:14px;line-height:14px">瑞典杯</div>
<div class="cb" style="left:561px;top:415px"><svg width="12" height="12" style="position:absolute;left:-1px;top:-1px"><path d="M2.4 6.2L4.8 8.9L9.3 2.6" stroke="#404040" stroke-width="2.3" fill="none"/></svg></div>
<div class="flt" style="left:573px;top:415px;height:14px;line-height:14px">欧会杯</div>
<div class="cb" style="left:610px;top:415px"><svg width="12" height="12" style="position:absolute;left:-1px;top:-1px"><path d="M2.4 6.2L4.8 8.9L9.3 2.6" stroke="#404040" stroke-width="2.3" fill="none"/></svg></div>
<div class="flt" style="left:622px;top:415px;height:14px;line-height:14px">欧罗巴杯</div>
<div style="position:absolute;left:0px;top:430px;width:908px;height:41px;background:#dde4ec"></div>
<div style="position:absolute;left:0px;top:430px;width:908px;height:1px;background:#c2c2c2"></div>
<div class="c" style="left:0px;top:431px;width:71px;height:40px;line-height:42px;">类型</div>
<div class="c" style="left:71px;top:431px;width:75px;height:40px;line-height:42px;">日期</div>
<div class="c" style="left:146px;top:431px;width:90px;height:40px;line-height:42px;">主场</div>
<div class="c" style="left:236px;top:431px;width:85px;height:40px;line-height:42px;">比分(半场)</div>
<div class="c" style="left:321px;top:431px;width:39px;height:40px;line-height:42px;">角球</div>
<div class="c" style="left:360px;top:431px;width:80px;height:40px;line-height:42px;">客场</div>
<div style="position:absolute;left:71px;top:430px;width:1px;height:41px;background:#c2c2c2"></div>
<div style="position:absolute;left:146px;top:430px;width:1px;height:41px;background:#c2c2c2"></div>
<div style="position:absolute;left:236px;top:430px;width:1px;height:41px;background:#c2c2c2"></div>
<div style="position:absolute;left:321px;top:430px;width:1px;height:41px;background:#c2c2c2"></div>
<div style="position:absolute;left:360px;top:430px;width:1px;height:41px;background:#c2c2c2"></div>
<div style="position:absolute;left:440px;top:430px;width:1px;height:41px;background:#c2c2c2"></div>
<div style="position:absolute;left:590px;top:430px;width:1px;height:41px;background:#c2c2c2"></div>
<div style="position:absolute;left:775px;top:430px;width:1px;height:41px;background:#c2c2c2"></div>
<div style="position:absolute;left:440px;top:453px;width:468px;height:1px;background:#c2c2c2"></div>
<div style="position:absolute;left:483px;top:453px;width:1px;height:18px;background:#c2c2c2"></div>
<div style="position:absolute;left:544px;top:453px;width:1px;height:18px;background:#c2c2c2"></div>
<div style="position:absolute;left:650px;top:453px;width:1px;height:18px;background:#c2c2c2"></div>
<div style="position:absolute;left:712px;top:453px;width:1px;height:18px;background:#c2c2c2"></div>
<div style="position:absolute;left:813px;top:453px;width:1px;height:18px;background:#c2c2c2"></div>
<div style="position:absolute;left:851px;top:453px;width:1px;height:18px;background:#c2c2c2"></div>
<div class="c" style="left:440px;top:454px;width:43px;height:17px;line-height:21px;">主</div>
<div class="c" style="left:483px;top:454px;width:61px;height:17px;line-height:21px;">盘口</div>
<div class="c" style="left:544px;top:454px;width:46px;height:17px;line-height:21px;">客</div>
<div class="c" style="left:590px;top:454px;width:60px;height:17px;line-height:21px;">主</div>
<div class="c" style="left:650px;top:454px;width:62px;height:17px;line-height:21px;">和</div>
<div class="c" style="left:712px;top:454px;width:63px;height:17px;line-height:21px;">客</div>
<div class="c" style="left:775px;top:454px;width:38px;height:17px;line-height:21px;">胜负</div>
<div class="c" style="left:813px;top:454px;width:38px;height:17px;line-height:21px;">让球</div>
<div class="c" style="left:851px;top:454px;width:57px;height:17px;line-height:21px;">进球数</div>
<div class="sel" style="left:463px;top:432px;width:59px;height:20px"><div class="st" style="font-size:13px;">Crow*</div><div class="tri" style="left:45px"></div></div>
<div class="sel" style="left:530px;top:432px;width:36px;height:20px"><div class="st" style="">终</div><div class="tri" style="left:22px"></div></div>
<div class="sel" style="left:618px;top:432px;width:84px;height:20px"><div class="st" style="">胜平负均值</div><div class="tri" style="left:70px"></div></div>
<div class="sel" style="left:710px;top:432px;width:36px;height:20px"><div class="st" style="">终</div><div class="tri" style="left:22px"></div></div>
<div class="sel" style="left:818px;top:432px;width:48px;height:20px"><div class="st" style="">全场</div><div class="tri" style="left:34px"></div></div>
<div style="position:absolute;left:0px;top:471px;width:908px;height:1px;background:#c2c2c2"></div>
<div style="position:absolute;left:0px;top:472px;width:908px;height:27px;background:#fff"></div>
<div style="position:absolute;left:441px;top:472px;width:149px;height:27px;background:#fdf9f6"></div>
<div style="position:absolute;left:591px;top:472px;width:184px;height:27px;background:#f0f7fc"></div>
<div style="position:absolute;left:0px;top:472px;width:71px;height:27px;background:#003e8c"></div>
<div class="c" style="left:0px;top:472px;width:71px;height:27px;line-height:29px;color:#fff">瑞典超</div>
<div class="c" style="left:71px;top:472px;width:75px;height:27px;line-height:29px;color:#2a2a2a;font-size:12.5px">25-07-06</div>
<div class="c" style="left:146px;top:472px;width:90px;height:27px;line-height:29px;color:#111">埃尔夫斯堡</div>
<div class="c" style="left:236px;top:472px;width:85px;height:27px;line-height:29px;color:#2a2a2a;font-size:12.5px"><span style="color:#f00">0-2</span>(0-1)</div>
<div class="c" style="left:321px;top:472px;width:39px;height:27px;line-height:29px;color:#2a2a2a;font-size:12.5px">16-0</div>
<div class="c" style="left:360px;top:472px;width:80px;height:27px;line-height:29px;color:#111"><span style="color:#007400">赫根</span></div>
<div class="c" style="left:440px;top:472px;width:43px;height:27px;line-height:29px;color:#2a2a2a;font-size:12.5px">0.96</div>
<div class="c" style="left:483px;top:472px;width:61px;height:27px;line-height:29px;color:#111">半/一</div>
<div class="c" style="left:544px;top:472px;width:46px;height:27px;line-height:29px;color:#2a2a2a;font-size:12.5px">0.93</div>
<div class="c" style="left:590px;top:472px;width:60px;height:27px;line-height:29px;color:#2a2a2a;font-size:12.5px">1.71</div>
<div class="c" style="left:650px;top:472px;width:62px;height:27px;line-height:29px;color:#2a2a2a;font-size:12.5px">3.98</div>
<div class="c" style="left:712px;top:472px;width:63px;height:27px;line-height:29px;color:#2a2a2a;font-size:12.5px">4.17</div>
<div class="c" style="left:775px;top:472px;width:38px;height:27px;line-height:29px;color:#111"><span style="color:#f00">勝</span></div>
<div class="c" style="left:813px;top:472px;width:38px;height:27px;line-height:29px;color:#111"><span style="color:#f00">贏</span></div>
<div class="c" style="left:851px;top:472px;width:57px;height:27px;line-height:29px;color:#111"><span style="color:#007400">小</span></div>
<div style="position:absolute;left:0px;top:499px;width:908px;height:1px;background:#c2c2c2"></div>
<div style="position:absolute;left:71px;top:471px;width:1px;height:28px;background:#c2c2c2"></div>
<div style="position:absolute;left:146px;top:471px;width:1px;height:28px;background:#c2c2c2"></div>
<div style="position:absolute;left:236px;top:471px;width:1px;height:28px;background:#c2c2c2"></div>
<div style="position:absolute;left:321px;top:471px;width:1px;height:28px;background:#c2c2c2"></div>
<div style="position:absolute;left:360px;top:471px;width:1px;height:28px;background:#c2c2c2"></div>
<div style="position:absolute;left:440px;top:471px;width:1px;height:28px;background:#c2c2c2"></div>
<div style="position:absolute;left:483px;top:471px;width:1px;height:28px;background:#c2c2c2"></div>
<div style="position:absolute;left:544px;top:471px;width:1px;height:28px;background:#c2c2c2"></div>
<div style="position:absolute;left:590px;top:471px;width:1px;height:28px;background:#c2c2c2"></div>
<div style="position:absolute;left:650px;top:471px;width:1px;height:28px;background:#c2c2c2"></div>
<div style="position:absolute;left:712px;top:471px;width:1px;height:28px;background:#c2c2c2"></div>
<div style="position:absolute;left:775px;top:471px;width:1px;height:28px;background:#c2c2c2"></div>
<div style="position:absolute;left:813px;top:471px;width:1px;height:28px;background:#c2c2c2"></div>
<div style="position:absolute;left:851px;top:471px;width:1px;height:28px;background:#c2c2c2"></div>
<div style="position:absolute;left:0px;top:500px;width:908px;height:27px;background:#f0f0f0"></div>
<div style="position:absolute;left:441px;top:500px;width:149px;height:27px;background:#fdf9f6"></div>
<div style="position:absolute;left:591px;top:500px;width:184px;height:27px;background:#f0f7fc"></div>
<div style="position:absolute;left:0px;top:500px;width:71px;height:27px;background:#003e8c"></div>
<div class="c" style="left:0px;top:500px;width:71px;height:27px;line-height:29px;color:#fff">瑞典超</div>
<div class="c" style="left:71px;top:500px;width:75px;height:27px;line-height:29px;color:#2a2a2a;font-size:12.5px">25-06-29</div>
<div class="c" style="left:146px;top:500px;width:90px;height:27px;line-height:29px;color:#111"><span style="color:#007400">赫根</span></div>
<div class="c" style="left:236px;top:500px;width:85px;height:27px;line-height:29px;color:#2a2a2a;font-size:12.5px"><span style="color:#f00">1-3</span>(0-2)</div>
<div class="c" style="left:321px;top:500px;width:39px;height:27px;line-height:29px;color:#2a2a2a;font-size:12.5px">1-4</div>
<div class="c" style="left:360px;top:500px;width:80px;height:27px;line-height:29px;color:#111">加尔斯</div>
<div class="c" style="left:440px;top:500px;width:43px;height:27px;line-height:29px;color:#2a2a2a;font-size:12.5px">0.85</div>
<div class="c" style="left:483px;top:500px;width:61px;height:27px;line-height:29px;color:#111"><span style="color:#f00;font-size:15px;line-height:10px;margin-right:1px">*</span>平/半</div>
<div class="c" style="left:544px;top:500px;width:46px;height:27px;line-height:29px;color:#2a2a2a;font-size:12.5px">1.04</div>
<div class="c" style="left:590px;top:500px;width:60px;height:27px;line-height:29px;color:#2a2a2a;font-size:12.5px">2.71</div>
<div class="c" style="left:650px;top:500px;width:62px;height:27px;line-height:29px;color:#2a2a2a;font-size:12.5px">3.43</div>
<div class="c" style="left:712px;top:500px;width:63px;height:27px;line-height:29px;color:#2a2a2a;font-size:12.5px">2.41</div>
<div class="c" style="left:775px;top:500px;width:38px;height:27px;line-height:29px;color:#111"><span style="color:#007400">負</span></div>
<div class="c" style="left:813px;top:500px;width:38px;height:27px;line-height:29px;color:#111"><span style="color:#007400">輸</span></div>
<div class="c" style="left:851px;top:500px;width:57px;height:27px;line-height:29px;color:#111"><span style="color:#f00">大</span></div>
<div style="position:absolute;left:0px;top:527px;width:908px;height:1px;background:#c2c2c2"></div>
<div style="position:absolute;left:71px;top:499px;width:1px;height:28px;background:#c2c2c2"></div>
<div style="position:absolute;left:146px;top:499px;width:1px;height:28px;background:#c2c2c2"></div>
<div style="position:absolute;left:236px;top:499px;width:1px;height:28px;background:#c2c2c2"></div>
<div style="position:absolute;left:321px;top:499px;width:1px;height:28px;background:#c2c2c2"></div>
<div style="position:absolute;left:360px;top:499px;width:1px;height:28px;background:#c2c2c2"></div>
<div style="position:absolute;left:440px;top:499px;width:1px;height:28px;background:#c2c2c2"></div>
<div style="position:absolute;left:483px;top:499px;width:1px;height:28px;background:#c2c2c2"></div>
<div style="position:absolute;left:544px;top:499px;width:1px;height:28px;background:#c2c2c2"></div>
<div style="position:absolute;left:590px;top:499px;width:1px;height:28px;background:#c2c2c2"></div>
<div style="position:absolute;left:650px;top:499px;width:1px;height:28px;background:#c2c2c2"></div>
<div style="position:absolute;left:712px;top:499px;width:1px;height:28px;background:#c2c2c2"></div>
<div style="position:absolute;left:775px;top:499px;width:1px;height:28px;background:#c2c2c2"></div>
<div style="position:absolute;left:813px;top:499px;width:1px;height:28px;background:#c2c2c2"></div>
<div style="position:absolute;left:851px;top:499px;width:1px;height:28px;background:#c2c2c2"></div>
<div style="position:absolute;left:0px;top:528px;width:908px;height:27px;background:#fff"></div>
<div style="position:absolute;left:441px;top:528px;width:149px;height:27px;background:#fdf9f6"></div>
<div style="position:absolute;left:591px;top:528px;width:184px;height:27px;background:#f0f7fc"></div>
<div style="position:absolute;left:0px;top:528px;width:71px;height:27px;background:#08a5a0"></div>
<div class="c" style="left:0px;top:528px;width:71px;height:27px;line-height:29px;color:#fff">球会友谊</div>
<div class="c" style="left:71px;top:528px;width:75px;height:27px;line-height:29px;color:#2a2a2a;font-size:12.5px">25-06-16</div>
<div class="c" style="left:146px;top:528px;width:90px;height:27px;line-height:29px;color:#111"><span style="color:#007400">赫根</span></div>
<div class="c" style="left:236px;top:528px;width:85px;height:27px;line-height:29px;color:#2a2a2a;font-size:12.5px"><span style="color:#f00">1-0</span>(1-0)</div>
<div class="c" style="left:321px;top:528px;width:39px;height:27px;line-height:29px;color:#2a2a2a;font-size:12.5px">2-7</div>
<div class="c" style="left:360px;top:528px;width:80px;height:27px;line-height:29px;color:#111">特罗姆瑟</div>
<div class="c" style="left:440px;top:528px;width:43px;height:27px;line-height:29px;color:#111"></div>
<div class="c" style="left:483px;top:528px;width:61px;height:27px;line-height:29px;color:#111"></div>
<div class="c" style="left:544px;top:528px;width:46px;height:27px;line-height:29px;color:#111"></div>
<div class="c" style="left:590px;top:528px;width:60px;height:27px;line-height:29px;color:#2a2a2a;font-size:12.5px">2.40</div>
<div class="c" style="left:650px;top:528px;width:62px;height:27px;line-height:29px;color:#2a2a2a;font-size:12.5px">3.71</div>
<div class="c" style="left:712px;top:528px;width:63px;height:27px;line-height:29px;color:#2a2a2a;font-size:12.5px">2.39</div>
<div class="c" style="left:775px;top:528px;width:38px;height:27px;line-height:29px;color:#111"><span style="color:#f00">勝</span></div>
<div class="c" style="left:813px;top:528px;width:38px;height:27px;line-height:29px;color:#111"></div>
<div class="c" style="left:851px;top:528px;width:57px;height:27px;line-height:29px;color:#111"></div>
<div style="position:absolute;left:0px;top:555px;width:908px;height:1px;background:#c2c2c2"></div>
<div style="position:absolute;left:71px;top:527px;width:1px;height:28px;background:#c2c2c2"></div>
<div style="position:absolute;left:146px;top:527px;width:1px;height:28px;background:#c2c2c2"></div>
<div style="position:absolute;left:236px;top:527px;width:1px;height:28px;background:#c2c2c2"></div>
<div style="position:absolute;left:321px;top:527px;width:1px;height:28px;background:#c2c2c2"></div>
<div style="position:absolute;left:360px;top:527px;width:1px;height:28px;background:#c2c2c2"></div>
<div style="position:absolute;left:440px;top:527px;width:1px;height:28px;background:#c2c2c2"></div>
<div style="position:absolute;left:483px;top:527px;width:1px;height:28px;background:#c2c2c2"></div>
<div style="position:absolute;left:544px;top:527px;width:1px;height:28px;background:#c2c2c2"></div>
<div style="position:absolute;left:590px;top:527px;width:1px;height:28px;background:#c2c2c2"></div>
<div style="position:absolute;left:650px;top:527px;width:1px;height:28px;background:#c2c2c2"></div>
<div style="position:absolute;left:712px;top:527px;width:1px;height:28px;background:#c2c2c2"></div>
<div style="position:absolute;left:775px;top:527px;width:1px;height:28px;background:#c2c2c2"></div>
<div style="position:absolute;left:813px;top:527px;width:1px;height:28px;background:#c2c2c2"></div>
<div style="position:absolute;left:851px;top:527px;width:1px;height:28px;background:#c2c2c2"></div>
<div style="position:absolute;left:0px;top:556px;width:908px;height:27px;background:#f0f0f0"></div>
<div style="position:absolute;left:441px;top:556px;width:149px;height:27px;background:#fdf9f6"></div>
<div style="position:absolute;left:591px;top:556px;width:184px;height:27px;background:#f0f7fc"></div>
<div style="position:absolute;left:0px;top:556px;width:71px;height:27px;background:#003e8c"></div>
<div class="c" style="left:0px;top:556px;width:71px;height:27px;line-height:29px;color:#fff">瑞典超</div>
<div class="c" style="left:71px;top:556px;width:75px;height:27px;line-height:29px;color:#2a2a2a;font-size:12.5px">25-06-01</div>
<div class="c" style="left:146px;top:556px;width:90px;height:27px;line-height:29px;color:#111">马尔默</div>
<div class="c" style="left:236px;top:556px;width:85px;height:27px;line-height:29px;color:#2a2a2a;font-size:12.5px"><span style="color:#f00">3-0</span>(2-0)</div>
<div class="c" style="left:321px;top:556px;width:39px;height:27px;line-height:29px;color:#2a2a2a;font-size:12.5px">8-4</div>
<div class="c" style="left:360px;top:556px;width:80px;height:27px;line-height:29px;color:#111"><span style="color:#007400">赫根</span></div>
<div class="c" style="left:440px;top:556px;width:43px;height:27px;line-height:29px;color:#2a2a2a;font-size:12.5px">0.92</div>
<div class="c" style="left:483px;top:556px;width:61px;height:27px;line-height:29px;color:#111">半/一</div>
<div class="c" style="left:544px;top:556px;width:46px;height:27px;line-height:29px;color:#2a2a2a;font-size:12.5px">0.97</div>
<div class="c" style="left:590px;top:556px;width:60px;height:27px;line-height:29px;color:#2a2a2a;font-size:12.5px">1.66</div>
<div class="c" style="left:650px;top:556px;width:62px;height:27px;line-height:29px;color:#2a2a2a;font-size:12.5px">4.00</div>
<div class="c" style="left:712px;top:556px;width:63px;height:27px;line-height:29px;color:#2a2a2a;font-size:12.5px">4.56</div>
<div class="c" style="left:775px;top:556px;width:38px;height:27px;line-height:29px;color:#111"><span style="color:#007400">負</span></div>
<div class="c" style="left:813px;top:556px;width:38px;height:27px;line-height:29px;color:#111"><span style="color:#007400">輸</span></div>
<div class="c" style="left:851px;top:556px;width:57px;height:27px;line-height:29px;color:#111"><span style="color:#f00">大</span></div>
<div style="position:absolute;left:0px;top:583px;width:908px;height:1px;background:#c2c2c2"></div>
<div style="position:absolute;left:71px;top:555px;width:1px;height:28px;background:#c2c2c2"></div>
<div style="position:absolute;left:146px;top:555px;width:1px;height:28px;background:#c2c2c2"></div>
<div style="position:absolute;left:236px;top:555px;width:1px;height:28px;background:#c2c2c2"></div>
<div style="position:absolute;left:321px;top:555px;width:1px;height:28px;background:#c2c2c2"></div>
<div style="position:absolute;left:360px;top:555px;width:1px;height:28px;background:#c2c2c2"></div>
<div style="position:absolute;left:440px;top:555px;width:1px;height:28px;background:#c2c2c2"></div>
<div style="position:absolute;left:483px;top:555px;width:1px;height:28px;background:#c2c2c2"></div>
<div style="position:absolute;left:544px;top:555px;width:1px;height:28px;background:#c2c2c2"></div>
<div style="position:absolute;left:590px;top:555px;width:1px;height:28px;background:#c2c2c2"></div>
<div style="position:absolute;left:650px;top:555px;width:1px;height:28px;background:#c2c2c2"></div>
<div style="position:absolute;left:712px;top:555px;width:1px;height:28px;background:#c2c2c2"></div>
<div style="position:absolute;left:775px;top:555px;width:1px;height:28px;background:#c2c2c2"></div>
<div style="position:absolute;left:813px;top:555px;width:1px;height:28px;background:#c2c2c2"></div>
<div style="position:absolute;left:851px;top:555px;width:1px;height:28px;background:#c2c2c2"></div>
<div style="position:absolute;left:0px;top:584px;width:908px;height:27px;background:#fff"></div>
<div style="position:absolute;left:441px;top:584px;width:149px;height:27px;background:#fdf9f6"></div>
<div style="position:absolute;left:591px;top:584px;width:184px;height:27px;background:#f0f7fc"></div>
<div style="position:absolute;left:0px;top:584px;width:71px;height:27px;background:#0a7566"></div>
<div class="c" style="left:0px;top:584px;width:71px;height:27px;line-height:29px;color:#fff">瑞典杯</div>
<div class="c" style="left:71px;top:584px;width:75px;height:27px;line-height:29px;color:#2a2a2a;font-size:12.5px">25-05-29</div>
<div class="c" style="left:146px;top:584px;width:90px;height:27px;line-height:29px;color:#111">马尔默</div>
<div class="c" style="left:236px;top:584px;width:85px;height:27px;line-height:29px;color:#2a2a2a;font-size:12.5px"><span style="color:#f00">0-0</span>(0-0)</div>
<div class="c" style="left:321px;top:584px;width:39px;height:27px;line-height:29px;color:#2a2a2a;font-size:12.5px">7-4</div>
<div class="c" style="left:360px;top:584px;width:80px;height:27px;line-height:29px;color:#111"><span style="color:#007400">赫根</span></div>
<div class="c" style="left:440px;top:584px;width:43px;height:27px;line-height:29px;color:#2a2a2a;font-size:12.5px">0.95</div>
<div class="c" style="left:483px;top:584px;width:61px;height:27px;line-height:29px;color:#111">一球</div>
<div class="c" style="left:544px;top:584px;width:46px;height:27px;line-height:29px;color:#2a2a2a;font-size:12.5px">0.93</div>
<div class="c" style="left:590px;top:584px;width:60px;height:27px;line-height:29px;color:#2a2a2a;font-size:12.5px">1.52</div>
<div class="c" style="left:650px;top:584px;width:62px;height:27px;line-height:29px;color:#2a2a2a;font-size:12.5px">4.21</div>
<div class="c" style="left:712px;top:584px;width:63px;height:27px;line-height:29px;color:#2a2a2a;font-size:12.5px">5.43</div>
<div class="c" style="left:775px;top:584px;width:38px;height:27px;line-height:29px;color:#111"><span style="color:#00f">平</span></div>
<div class="c" style="left:813px;top:584px;width:38px;height:27px;line-height:29px;color:#111"><span style="color:#f00">贏</span></div>
<div class="c" style="left:851px;top:584px;width:57px;height:27px;line-height:29px;color:#111"><span style="color:#007400">小</span></div>
<div style="position:absolute;left:0px;top:611px;width:908px;height:1px;background:#c2c2c2"></div>
<div style="position:absolute;left:71px;top:583px;width:1px;height:28px;background:#c2c2c2"></div>
<div style="position:absolute;left:146px;top:583px;width:1px;height:28px;background:#c2c2c2"></div>
<div style="position:absolute;left:236px;top:583px;width:1px;height:28px;background:#c2c2c2"></div>
<div style="position:absolute;left:321px;top:583px;width:1px;height:28px;background:#c2c2c2"></div>
<div style="position:absolute;left:360px;top:583px;width:1px;height:28px;background:#c2c2c2"></div>
<div style="position:absolute;left:440px;top:583px;width:1px;height:28px;background:#c2c2c2"></div>
<div style="position:absolute;left:483px;top:583px;width:1px;height:28px;background:#c2c2c2"></div>
<div style="position:absolute;left:544px;top:583px;width:1px;height:28px;background:#c2c2c2"></div>
<div style="position:absolute;left:590px;top:583px;width:1px;height:28px;background:#c2c2c2"></div>
<div style="position:absolute;left:650px;top:583px;width:1px;height:28px;background:#c2c2c2"></div>
<div style="position:absolute;left:712px;top:583px;width:1px;height:28px;background:#c2c2c2"></div>
<div style="position:absolute;left:775px;top:583px;width:1px;height:28px;background:#c2c2c2"></div>
<div style="position:absolute;left:813px;top:583px;width:1px;height:28px;background:#c2c2c2"></div>
<div style="position:absolute;left:851px;top:583px;width:1px;height:28px;background:#c2c2c2"></div>
<div style="position:absolute;left:0px;top:612px;width:908px;height:27px;background:#f0f0f0"></div>
<div style="position:absolute;left:441px;top:612px;width:149px;height:27px;background:#fdf9f6"></div>
<div style="position:absolute;left:591px;top:612px;width:184px;height:27px;background:#f0f7fc"></div>
<div style="position:absolute;left:0px;top:612px;width:71px;height:27px;background:#003e8c"></div>
<div class="c" style="left:0px;top:612px;width:71px;height:27px;line-height:29px;color:#fff">瑞典超</div>
<div class="c" style="left:71px;top:612px;width:75px;height:27px;line-height:29px;color:#2a2a2a;font-size:12.5px">25-05-25</div>
<div class="c" style="left:146px;top:612px;width:90px;height:27px;line-height:29px;color:#111">佐加顿斯</div>
<div class="c" style="left:236px;top:612px;width:85px;height:27px;line-height:29px;color:#2a2a2a;font-size:12.5px"><span style="color:#f00">1-1</span>(0-0)</div>
<div class="c" style="left:321px;top:612px;width:39px;height:27px;line-height:29px;color:#2a2a2a;font-size:12.5px">7-1</div>
<div class="c" style="left:360px;top:612px;width:80px;height:27px;line-height:29px;color:#111"><span style="color:#007400">赫根</span></div>
<div class="c" style="left:440px;top:612px;width:43px;height:27px;line-height:29px;color:#2a2a2a;font-size:12.5px">0.96</div>
<div class="c" style="left:483px;top:612px;width:61px;height:27px;line-height:29px;color:#111">平/半</div>
<div class="c" style="left:544px;top:612px;width:46px;height:27px;line-height:29px;color:#2a2a2a;font-size:12.5px">0.93</div>
<div class="c" style="left:590px;top:612px;width:60px;height:27px;line-height:29px;color:#2a2a2a;font-size:12.5px">1.97</div>
<div class="c" style="left:650px;top:612px;width:62px;height:27px;line-height:29px;color:#2a2a2a;font-size:12.5px">3.61</div>
<div class="c" style="left:712px;top:612px;width:63px;height:27px;line-height:29px;color:#2a2a2a;font-size:12.5px">3.49</div>
<div class="c" style="left:775px;top:612px;width:38px;height:27px;line-height:29px;color:#111"><span style="color:#00f">平</span></div>
<div class="c" style="left:813px;top:612px;width:38px;height:27px;line-height:29px;color:#111"><span style="color:#f00">贏</span></div>
<div class="c" style="left:851px;top:612px;width:57px;height:27px;line-height:29px;color:#111"><span style="color:#007400">小</span></div>
<div style="position:absolute;left:0px;top:639px;width:908px;height:1px;background:#c2c2c2"></div>
<div style="position:absolute;left:71px;top:611px;width:1px;height:28px;background:#c2c2c2"></div>
<div style="position:absolute;left:146px;top:611px;width:1px;height:28px;background:#c2c2c2"></div>
<div style="position:absolute;left:236px;top:611px;width:1px;height:28px;background:#c2c2c2"></div>
<div style="position:absolute;left:321px;top:611px;width:1px;height:28px;background:#c2c2c2"></div>
<div style="position:absolute;left:360px;top:611px;width:1px;height:28px;background:#c2c2c2"></div>
<div style="position:absolute;left:440px;top:611px;width:1px;height:28px;background:#c2c2c2"></div>
<div style="position:absolute;left:483px;top:611px;width:1px;height:28px;background:#c2c2c2"></div>
<div style="position:absolute;left:544px;top:611px;width:1px;height:28px;background:#c2c2c2"></div>
<div style="position:absolute;left:590px;top:611px;width:1px;height:28px;background:#c2c2c2"></div>
<div style="position:absolute;left:650px;top:611px;width:1px;height:28px;background:#c2c2c2"></div>
<div style="position:absolute;left:712px;top:611px;width:1px;height:28px;background:#c2c2c2"></div>
<div style="position:absolute;left:775px;top:611px;width:1px;height:28px;background:#c2c2c2"></div>
<div style="position:absolute;left:813px;top:611px;width:1px;height:28px;background:#c2c2c2"></div>
<div style="position:absolute;left:851px;top:611px;width:1px;height:28px;background:#c2c2c2"></div>
<div style="position:absolute;left:0px;top:640px;width:908px;height:27px;background:#fff"></div>
<div style="position:absolute;left:441px;top:640px;width:149px;height:27px;background:#fdf9f6"></div>
<div style="position:absolute;left:591px;top:640px;width:184px;height:27px;background:#f0f7fc"></div>
<div style="position:absolute;left:0px;top:640px;width:71px;height:27px;background:#003e8c"></div>
<div class="c" style="left:0px;top:640px;width:71px;height:27px;line-height:29px;color:#fff">瑞典超</div>
<div class="c" style="left:71px;top:640px;width:75px;height:27px;line-height:29px;color:#2a2a2a;font-size:12.5px">25-05-18</div>
<div class="c" style="left:146px;top:640px;width:90px;height:27px;line-height:29px;color:#111"><span style="color:#007400">赫根</span></div>
<div class="c" style="left:236px;top:640px;width:85px;height:27px;line-height:29px;color:#2a2a2a;font-size:12.5px"><span style="color:#f00">2-0</span>(1-0)</div>
<div class="c" style="left:321px;top:640px;width:39px;height:27px;line-height:29px;color:#2a2a2a;font-size:12.5px">5-4</div>
<div class="c" style="left:360px;top:640px;width:80px;height:27px;line-height:29px;color:#111">渥那模</div>
<div class="c" style="left:440px;top:640px;width:43px;height:27px;line-height:29px;color:#2a2a2a;font-size:12.5px">0.99</div>
<div class="c" style="left:483px;top:640px;width:61px;height:27px;line-height:29px;color:#111">半球</div>
<div class="c" style="left:544px;top:640px;width:46px;height:27px;line-height:29px;color:#2a2a2a;font-size:12.5px">0.90</div>
<div class="c" style="left:590px;top:640px;width:60px;height:27px;line-height:29px;color:#2a2a2a;font-size:12.5px">1.94</div>
<div class="c" style="left:650px;top:640px;width:62px;height:27px;line-height:29px;color:#2a2a2a;font-size:12.5px">3.78</div>
<div class="c" style="left:712px;top:640px;width:63px;height:27px;line-height:29px;color:#2a2a2a;font-size:12.5px">3.40</div>
<div class="c" style="left:775px;top:640px;width:38px;height:27px;line-height:29px;color:#111"><span style="color:#f00">勝</span></div>
<div class="c" style="left:813px;top:640px;width:38px;height:27px;line-height:29px;color:#111"><span style="color:#f00">贏</span></div>
<div class="c" style="left:851px;top:640px;width:57px;height:27px;line-height:29px;color:#111"><span style="color:#007400">小</span></div>
<div style="position:absolute;left:0px;top:667px;width:908px;height:1px;background:#c2c2c2"></div>
<div style="position:absolute;left:71px;top:639px;width:1px;height:28px;background:#c2c2c2"></div>
<div style="position:absolute;left:146px;top:639px;width:1px;height:28px;background:#c2c2c2"></div>
<div style="position:absolute;left:236px;top:639px;width:1px;height:28px;background:#c2c2c2"></div>
<div style="position:absolute;left:321px;top:639px;width:1px;height:28px;background:#c2c2c2"></div>
<div style="position:absolute;left:360px;top:639px;width:1px;height:28px;background:#c2c2c2"></div>
<div style="position:absolute;left:440px;top:639px;width:1px;height:28px;background:#c2c2c2"></div>
<div style="position:absolute;left:483px;top:639px;width:1px;height:28px;background:#c2c2c2"></div>
<div style="position:absolute;left:544px;top:639px;width:1px;height:28px;background:#c2c2c2"></div>
<div style="position:absolute;left:590px;top:639px;width:1px;height:28px;background:#c2c2c2"></div>
<div style="position:absolute;left:650px;top:639px;width:1px;height:28px;background:#c2c2c2"></div>
<div style="position:absolute;left:712px;top:639px;width:1px;height:28px;background:#c2c2c2"></div>
<div style="position:absolute;left:775px;top:639px;width:1px;height:28px;background:#c2c2c2"></div>
<div style="position:absolute;left:813px;top:639px;width:1px;height:28px;background:#c2c2c2"></div>
<div style="position:absolute;left:851px;top:639px;width:1px;height:28px;background:#c2c2c2"></div>
<div style="position:absolute;left:0px;top:668px;width:908px;height:27px;background:#f0f0f0"></div>
<div style="position:absolute;left:441px;top:668px;width:149px;height:27px;background:#fdf9f6"></div>
<div style="position:absolute;left:591px;top:668px;width:184px;height:27px;background:#f0f7fc"></div>
<div style="position:absolute;left:0px;top:668px;width:71px;height:27px;background:#003e8c"></div>
<div class="c" style="left:0px;top:668px;width:71px;height:27px;line-height:29px;color:#fff">瑞典超</div>
<div class="c" style="left:71px;top:668px;width:75px;height:27px;line-height:29px;color:#2a2a2a;font-size:12.5px">25-05-15</div>
<div class="c" style="left:146px;top:668px;width:90px;height:27px;line-height:29px;color:#111"><span style="color:#007400">赫根</span></div>
<div class="c" style="left:236px;top:668px;width:85px;height:27px;line-height:29px;color:#2a2a2a;font-size:12.5px"><span style="color:#f00">3-3</span>(0-1)</div>
<div class="c" style="left:321px;top:668px;width:39px;height:27px;line-height:29px;color:#2a2a2a;font-size:12.5px">4-2</div>
<div class="c" style="left:360px;top:668px;width:80px;height:27px;line-height:29px;color:#111">AIK法兰地</div>
<div class="c" style="left:440px;top:668px;width:43px;height:27px;line-height:29px;color:#2a2a2a;font-size:12.5px">1.06</div>
<div class="c" style="left:483px;top:668px;width:61px;height:27px;line-height:29px;color:#111">平手</div>
<div class="c" style="left:544px;top:668px;width:46px;height:27px;line-height:29px;color:#2a2a2a;font-size:12.5px">0.83</div>
<div class="c" style="left:590px;top:668px;width:60px;height:27px;line-height:29px;color:#2a2a2a;font-size:12.5px">2.72</div>
<div class="c" style="left:650px;top:668px;width:62px;height:27px;line-height:29px;color:#2a2a2a;font-size:12.5px">3.25</div>
<div class="c" style="left:712px;top:668px;width:63px;height:27px;line-height:29px;color:#2a2a2a;font-size:12.5px">2.49</div>
<div class="c" style="left:775px;top:668px;width:38px;height:27px;line-height:29px;color:#111"><span style="color:#00f">平</span></div>
<div class="c" style="left:813px;top:668px;width:38px;height:27px;line-height:29px;color:#111"><span style="color:#00f">走</span></div>
<div class="c" style="left:851px;top:668px;width:57px;height:27px;line-height:29px;color:#111"><span style="color:#f00">大</span></div>
<div style="position:absolute;left:0px;top:695px;width:908px;height:1px;background:#c2c2c2"></div>
<div style="position:absolute;left:71px;top:667px;width:1px;height:28px;background:#c2c2c2"></div>
<div style="position:absolute;left:146px;top:667px;width:1px;height:28px;background:#c2c2c2"></div>
<div style="position:absolute;left:236px;top:667px;width:1px;height:28px;background:#c2c2c2"></div>
<div style="position:absolute;left:321px;top:667px;width:1px;height:28px;background:#c2c2c2"></div>
<div style="position:absolute;left:360px;top:667px;width:1px;height:28px;background:#c2c2c2"></div>
<div style="position:absolute;left:440px;top:667px;width:1px;height:28px;background:#c2c2c2"></div>
<div style="position:absolute;left:483px;top:667px;width:1px;height:28px;background:#c2c2c2"></div>
<div style="position:absolute;left:544px;top:667px;width:1px;height:28px;background:#c2c2c2"></div>
<div style="position:absolute;left:590px;top:667px;width:1px;height:28px;background:#c2c2c2"></div>
<div style="position:absolute;left:650px;top:667px;width:1px;height:28px;background:#c2c2c2"></div>
<div style="position:absolute;left:712px;top:667px;width:1px;height:28px;background:#c2c2c2"></div>
<div style="position:absolute;left:775px;top:667px;width:1px;height:28px;background:#c2c2c2"></div>
<div style="position:absolute;left:813px;top:667px;width:1px;height:28px;background:#c2c2c2"></div>
<div style="position:absolute;left:851px;top:667px;width:1px;height:28px;background:#c2c2c2"></div>
<div style="position:absolute;left:0px;top:696px;width:908px;height:27px;background:#fff"></div>
<div style="position:absolute;left:441px;top:696px;width:149px;height:27px;background:#fdf9f6"></div>
<div style="position:absolute;left:591px;top:696px;width:184px;height:27px;background:#f0f7fc"></div>
<div style="position:absolute;left:0px;top:696px;width:71px;height:27px;background:#003e8c"></div>
<div class="c" style="left:0px;top:696px;width:71px;height:27px;line-height:29px;color:#fff">瑞典超</div>
<div class="c" style="left:71px;top:696px;width:75px;height:27px;line-height:29px;color:#2a2a2a;font-size:12.5px">25-05-10</div>
<div class="c" style="left:146px;top:696px;width:90px;height:27px;line-height:29px;color:#111">天狼星</div>
<div class="c" style="left:236px;top:696px;width:85px;height:27px;line-height:29px;color:#2a2a2a;font-size:12.5px"><span style="color:#f00">2-0</span>(1-0)</div>
<div class="c" style="left:321px;top:696px;width:39px;height:27px;line-height:29px;color:#2a2a2a;font-size:12.5px">5-4</div>
<div class="c" style="left:360px;top:696px;width:80px;height:27px;line-height:29px;color:#111"><span style="color:#007400">赫根</span></div>
<div class="c" style="left:440px;top:696px;width:43px;height:27px;line-height:29px;color:#2a2a2a;font-size:12.5px">1.00</div>
<div class="c" style="left:483px;top:696px;width:61px;height:27px;line-height:29px;color:#111">平手</div>
<div class="c" style="left:544px;top:696px;width:46px;height:27px;line-height:29px;color:#2a2a2a;font-size:12.5px">0.89</div>
<div class="c" style="left:590px;top:696px;width:60px;height:27px;line-height:29px;color:#2a2a2a;font-size:12.5px">2.59</div>
<div class="c" style="left:650px;top:696px;width:62px;height:27px;line-height:29px;color:#2a2a2a;font-size:12.5px">3.60</div>
<div class="c" style="left:712px;top:696px;width:63px;height:27px;line-height:29px;color:#2a2a2a;font-size:12.5px">2.43</div>
<div class="c" style="left:775px;top:696px;width:38px;height:27px;line-height:29px;color:#111"><span style="color:#007400">負</span></div>
<div class="c" style="left:813px;top:696px;width:38px;height:27px;line-height:29px;color:#111"><span style="color:#007400">輸</span></div>
<div class="c" style="left:851px;top:696px;width:57px;height:27px;line-height:29px;color:#111"><span style="color:#007400">小</span></div>
<div style="position:absolute;left:0px;top:723px;width:908px;height:1px;background:#c2c2c2"></div>
<div style="position:absolute;left:71px;top:695px;width:1px;height:28px;background:#c2c2c2"></div>
<div style="position:absolute;left:146px;top:695px;width:1px;height:28px;background:#c2c2c2"></div>
<div style="position:absolute;left:236px;top:695px;width:1px;height:28px;background:#c2c2c2"></div>
<div style="position:absolute;left:321px;top:695px;width:1px;height:28px;background:#c2c2c2"></div>
<div style="position:absolute;left:360px;top:695px;width:1px;height:28px;background:#c2c2c2"></div>
<div style="position:absolute;left:440px;top:695px;width:1px;height:28px;background:#c2c2c2"></div>
<div style="position:absolute;left:483px;top:695px;width:1px;height:28px;background:#c2c2c2"></div>
<div style="position:absolute;left:544px;top:695px;width:1px;height:28px;background:#c2c2c2"></div>
<div style="position:absolute;left:590px;top:695px;width:1px;height:28px;background:#c2c2c2"></div>
<div style="position:absolute;left:650px;top:695px;width:1px;height:28px;background:#c2c2c2"></div>
<div style="position:absolute;left:712px;top:695px;width:1px;height:28px;background:#c2c2c2"></div>
<div style="position:absolute;left:775px;top:695px;width:1px;height:28px;background:#c2c2c2"></div>
<div style="position:absolute;left:813px;top:695px;width:1px;height:28px;background:#c2c2c2"></div>
<div style="position:absolute;left:851px;top:695px;width:1px;height:28px;background:#c2c2c2"></div>
<div style="position:absolute;left:0px;top:724px;width:908px;height:27px;background:#f0f0f0"></div>
<div style="position:absolute;left:441px;top:724px;width:149px;height:27px;background:#fdf9f6"></div>
<div style="position:absolute;left:591px;top:724px;width:184px;height:27px;background:#f0f7fc"></div>
<div style="position:absolute;left:0px;top:724px;width:71px;height:27px;background:#003e8c"></div>
<div class="c" style="left:0px;top:724px;width:71px;height:27px;line-height:29px;color:#fff">瑞典超</div>
<div class="c" style="left:71px;top:724px;width:75px;height:27px;line-height:29px;color:#2a2a2a;font-size:12.5px">25-05-04</div>
<div class="c" style="left:146px;top:724px;width:90px;height:27px;line-height:29px;color:#111">诺科平</div>
<div class="c" style="left:236px;top:724px;width:85px;height:27px;line-height:29px;color:#2a2a2a;font-size:12.5px"><span style="color:#f00">0-2</span>(0-1)</div>
<div class="c" style="left:321px;top:724px;width:39px;height:27px;line-height:29px;color:#2a2a2a;font-size:12.5px">11-2</div>
<div class="c" style="left:360px;top:724px;width:80px;height:27px;line-height:29px;color:#111"><span style="color:#007400">赫根</span></div>
<div class="c" style="left:440px;top:724px;width:43px;height:27px;line-height:29px;color:#2a2a2a;font-size:12.5px">0.99</div>
<div class="c" style="left:483px;top:724px;width:61px;height:27px;line-height:29px;color:#111">平手</div>
<div class="c" style="left:544px;top:724px;width:46px;height:27px;line-height:29px;color:#2a2a2a;font-size:12.5px">0.90</div>
<div class="c" style="left:590px;top:724px;width:60px;height:27px;line-height:29px;color:#2a2a2a;font-size:12.5px">2.47</div>
<div class="c" style="left:650px;top:724px;width:62px;height:27px;line-height:29px;color:#2a2a2a;font-size:12.5px">3.76</div>
<div class="c" style="left:712px;top:724px;width:63px;height:27px;line-height:29px;color:#2a2a2a;font-size:12.5px">2.46</div>
<div class="c" style="left:775px;top:724px;width:38px;height:27px;line-height:29px;color:#111"><span style="color:#f00">勝</span></div>
<div class="c" style="left:813px;top:724px;width:38px;height:27px;line-height:29px;color:#111"><span style="color:#f00">贏</span></div>
<div class="c" style="left:851px;top:724px;width:57px;height:27px;line-height:29px;color:#111"><span style="color:#007400">小</span></div>
<div style="position:absolute;left:0px;top:751px;width:908px;height:1px;background:#c2c2c2"></div>
<div style="position:absolute;left:71px;top:723px;width:1px;height:28px;background:#c2c2c2"></div>
<div style="position:absolute;left:146px;top:723px;width:1px;height:28px;background:#c2c2c2"></div>
<div style="position:absolute;left:236px;top:723px;width:1px;height:28px;background:#c2c2c2"></div>
<div style="position:absolute;left:321px;top:723px;width:1px;height:28px;background:#c2c2c2"></div>
<div style="position:absolute;left:360px;top:723px;width:1px;height:28px;background:#c2c2c2"></div>
<div style="position:absolute;left:440px;top:723px;width:1px;height:28px;background:#c2c2c2"></div>
<div style="position:absolute;left:483px;top:723px;width:1px;height:28px;background:#c2c2c2"></div>
<div style="position:absolute;left:544px;top:723px;width:1px;height:28px;background:#c2c2c2"></div>
<div style="position:absolute;left:590px;top:723px;width:1px;height:28px;background:#c2c2c2"></div>
<div style="position:absolute;left:650px;top:723px;width:1px;height:28px;background:#c2c2c2"></div>
<div style="position:absolute;left:712px;top:723px;width:1px;height:28px;background:#c2c2c2"></div>
<div style="position:absolute;left:775px;top:723px;width:1px;height:28px;background:#c2c2c2"></div>
<div style="position:absolute;left:813px;top:723px;width:1px;height:28px;background:#c2c2c2"></div>
<div style="position:absolute;left:851px;top:723px;width:1px;height:28px;background:#c2c2c2"></div>
</body></html>
